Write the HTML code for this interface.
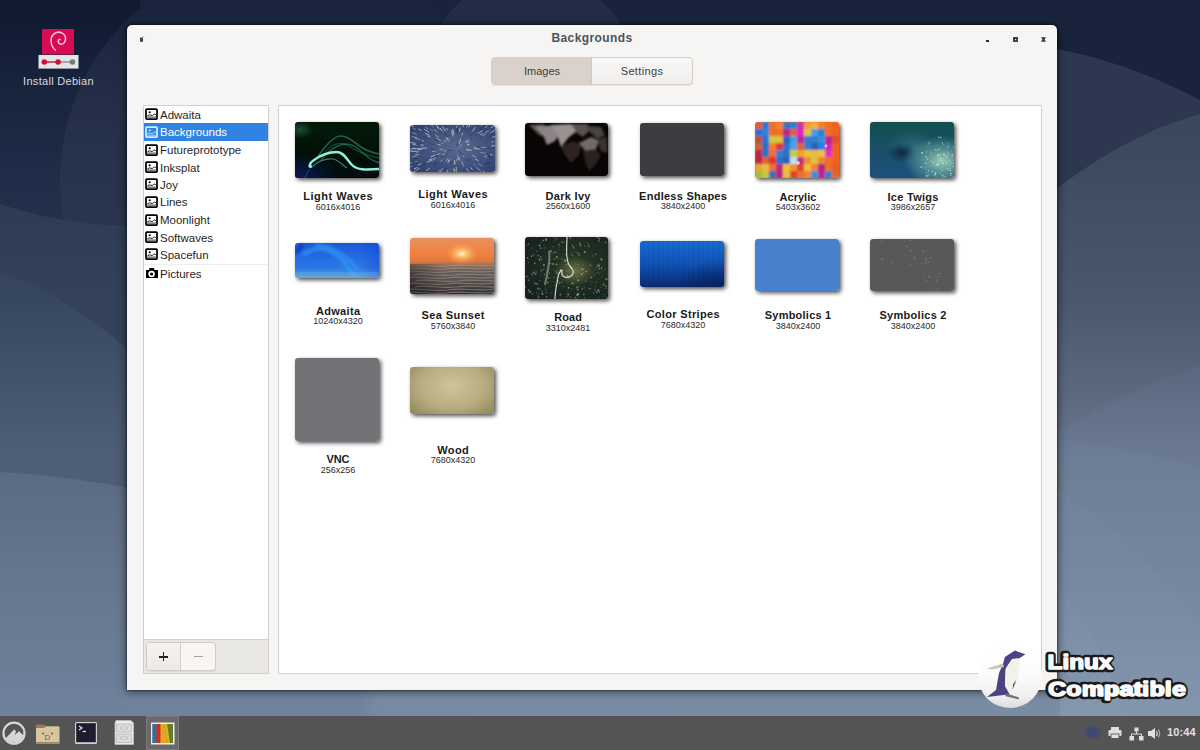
<!DOCTYPE html>
<html><head><meta charset="utf-8">
<style>
*{margin:0;padding:0;box-sizing:border-box}
html,body{width:1200px;height:750px;overflow:hidden}
body{position:relative;font-family:"Liberation Sans",sans-serif;background:#2a3650}
.abs{position:absolute}
#bgsvg{position:absolute;left:0;top:0}
#win{position:absolute;left:127px;top:25px;width:930px;height:665px;background:#f6f5f4;border-radius:5px 5px 0 0;box-shadow:0 1px 10px 1px rgba(0,0,0,.5),0 0 2px 1px rgba(0,0,0,.35)}
.title{position:absolute;left:127px;width:930px;top:31px;text-align:center;font-weight:bold;font-size:12px;letter-spacing:.4px;color:#4a5459;line-height:14px}
.side{position:absolute;left:143px;top:105px;width:126px;height:569px;border:1px solid #d5d0cc;background:#fff}
.tb{position:absolute;left:0;top:533px;width:124px;height:34px;border-top:1px solid #d5d0cc;background:#e9e7e4}
.main{position:absolute;left:278px;top:105px;width:764px;height:569px;border:1px solid #d5d0cc;background:#fff}
.it{position:absolute;left:160px;font-size:11.5px;color:#1f1f1f;line-height:12px}
.ic{position:absolute;left:145px;top:0;width:13px;height:12px}
.th{position:absolute;border-radius:3px;box-shadow:2px 2px 4px 0 rgba(0,0,0,.7);overflow:hidden}
.tt{position:absolute;width:115px;text-align:center;font-weight:bold;font-size:11px;letter-spacing:.55px;color:#1a1a1a;line-height:12px}
.td{position:absolute;width:115px;text-align:center;font-size:9px;color:#2a2a2a;line-height:10px}
</style></head><body>
<svg id="bgsvg" width="1200" height="750">
<defs>
<linearGradient id="bgL" x1="0" y1="0" x2="0" y2="716" gradientUnits="userSpaceOnUse">
<stop offset="0" stop-color="#0f1930"/><stop offset=".21" stop-color="#1e2a45"/><stop offset=".3" stop-color="#26334e"/><stop offset=".42" stop-color="#37475e"/><stop offset=".63" stop-color="#4f6078"/><stop offset=".84" stop-color="#67788f"/><stop offset="1" stop-color="#6f829c"/></linearGradient>
<linearGradient id="bgR" x1="0" y1="0" x2="0" y2="716" gradientUnits="userSpaceOnUse">
<stop offset="0" stop-color="#19243c"/><stop offset=".07" stop-color="#1b2540"/><stop offset=".14" stop-color="#2a3550"/><stop offset=".21" stop-color="#3c4a5e"/><stop offset=".28" stop-color="#404d64"/><stop offset=".42" stop-color="#4a586e"/><stop offset=".6" stop-color="#5a6982"/><stop offset=".64" stop-color="#68778f"/><stop offset=".78" stop-color="#6f7f96"/><stop offset="1" stop-color="#7c8fa6"/></linearGradient>
<linearGradient id="bgL0" x1="0" y1="0" x2="0" y2="716" gradientUnits="userSpaceOnUse">
<stop offset="0" stop-color="#0f1930"/><stop offset=".21" stop-color="#1e2a45"/><stop offset=".3" stop-color="#23304b"/><stop offset="1" stop-color="#23304b"/></linearGradient>
<linearGradient id="bgLA" x1="0" y1="204" x2="0" y2="300" gradientUnits="userSpaceOnUse">
<stop offset="0" stop-color="#2e3b55"/><stop offset="1" stop-color="#34415b"/></linearGradient>
<linearGradient id="bgLB" x1="0" y1="272" x2="0" y2="480" gradientUnits="userSpaceOnUse">
<stop offset="0" stop-color="#35445c"/><stop offset=".14" stop-color="#37475e"/><stop offset=".85" stop-color="#4d5d75"/><stop offset="1" stop-color="#4e5e76"/></linearGradient>
<linearGradient id="bgLC" x1="0" y1="472" x2="0" y2="716" gradientUnits="userSpaceOnUse">
<stop offset="0" stop-color="#5a6a82"/><stop offset=".52" stop-color="#67788f"/><stop offset="1" stop-color="#6f829c"/></linearGradient>
<linearGradient id="bgCirc" x1="0" y1="0" x2="0" y2="230" gradientUnits="userSpaceOnUse">
<stop offset="0" stop-color="#19243c"/><stop offset=".52" stop-color="#253048"/><stop offset="1" stop-color="#2a3650"/></linearGradient>
<linearGradient id="bgR3" x1="0" y1="114" x2="0" y2="716" gradientUnits="userSpaceOnUse">
<stop offset="0" stop-color="#3a475d"/><stop offset=".06" stop-color="#3c4a5e"/><stop offset=".31" stop-color="#4a586e"/><stop offset=".47" stop-color="#5c6a80"/><stop offset=".57" stop-color="#68778f"/><stop offset=".74" stop-color="#6f7f96"/><stop offset="1" stop-color="#7c8fa6"/></linearGradient>
<linearGradient id="bgB" x1="127" y1="0" x2="1057" y2="0" gradientUnits="userSpaceOnUse">
<stop offset="0" stop-color="#6f829c"/><stop offset=".25" stop-color="#70839d"/><stop offset=".27" stop-color="#788aa3"/><stop offset="1" stop-color="#7a8ca4"/></linearGradient>
</defs>
<rect x="0" y="0" width="1200" height="750" fill="#19243c"/>
<rect x="0" y="0" width="140" height="716" fill="url(#bgL0)"/>
<circle cx="285" cy="180" r="225" fill="url(#bgCirc)"/>
<path d="M0 204 Q64 226 140 226 L140 716 L0 716 Z" fill="url(#bgLA)"/>
<path d="M0 272 Q70 296 140 360 L140 716 L0 716 Z" fill="url(#bgLB)"/>
<path d="M0 472 Q70 476 140 490 L140 716 L0 716 Z" fill="url(#bgLC)"/>
<rect x="1040" y="0" width="160" height="716" fill="#19243c"/>
<path d="M1040 46 Q1120 58 1200 100 L1200 716 L1040 716 Z" fill="#2d3850"/>
<path d="M1040 202 Q1120 136 1200 114 L1200 716 L1040 716 Z" fill="url(#bgR3)"/>
<g fill="#c8d8ff">
<path d="M1040 442 Q1120 392 1200 366 L1200 716 L1040 716 Z" opacity=".035"/>
<path d="M1040 436 Q1130 448 1200 467 L1200 716 L1040 716 Z" opacity=".03"/>
<path d="M1040 480 Q1140 536 1200 629 L1200 716 L1040 716 Z" opacity=".03"/>
<path d="M1040 566 Q1095 620 1125 716 L1040 716 Z" opacity=".03"/>
</g>
<rect x="120" y="680" width="940" height="36" fill="url(#bgB)"/>
<circle cx="531" cy="85" r="109" fill="#232d46"/>

</svg>
<!-- desktop icon -->
<svg class="abs" style="left:36px;top:26px" width="46" height="46" viewBox="36 26 46 46">
<rect x="42" y="29" width="32" height="25.5" fill="#d70a53"/>
<path d="M56 50.5 C50.5 47 49 37 54.5 33.5 C60 30 66 34 65.5 39.5 C65 44 60.5 45.5 58.7 42.8 C57.5 41 58.5 38.8 60.8 39.6" fill="none" stroke="#f4c8d8" stroke-width="1.5"/>
<rect x="38.5" y="55" width="40" height="13.6" fill="#e2e6e6"/>
<line x1="44.3" y1="62" x2="58.1" y2="62" stroke="#c8103e" stroke-width="1.4"/>
<line x1="58.1" y1="62" x2="72.5" y2="62" stroke="#8a8a8a" stroke-width="1.4"/>
<circle cx="44.3" cy="62" r="2.8" fill="#d0103e"/><circle cx="58.1" cy="62" r="2.8" fill="#d0103e"/><circle cx="72.5" cy="62" r="2.8" fill="#7a7a7a"/>
</svg>
<div class="abs" style="left:17.5px;top:74.5px;width:82px;text-align:center;font-size:11px;letter-spacing:.3px;color:#dcdcdc">Install Debian</div>

<div id="win"></div>
<div class="title">Backgrounds</div>
<svg class="abs" style="left:139px;top:35px" width="6" height="8"><path d="M1 2.5 H4 V6.8 H1 Z" fill="#454545"/><path d="M3.6 2.5 L5 1" stroke="#999" stroke-width=".8"/></svg>
<div class="abs" style="left:986px;top:40px;width:3px;height:2px;background:#2e2e2e"></div>
<svg class="abs" style="left:1012px;top:36px" width="7" height="7"><rect x="1" y="1" width="5" height="5" rx=".8" fill="#3a3a3a"/><rect x="3" y="3" width="1.2" height="1.2" fill="#eee"/></svg>
<svg class="abs" style="left:1040px;top:36px" width="7" height="7"><path d="M1 1.2 H6 L4.6 3.5 L6 5.8 H1 L2.4 3.5 Z" fill="#3a3a3a"/></svg>

<!-- segmented -->
<div class="abs" style="left:491px;top:57px;width:202px;height:28px;border:1px solid #d3cec9;border-radius:4px;background:linear-gradient(180deg,#f8f8f7,#efeeed);overflow:hidden;box-shadow:0 1px 1px rgba(0,0,0,.07)">
  <div class="abs" style="left:0;top:0;width:100px;height:26px;background:#d8d1cc;border-right:1px solid #cdc7c2"></div>
  <div class="abs" style="left:0;top:7px;width:100px;text-align:center;font-size:11px;color:#3e3e3e">Images</div>
  <div class="abs" style="left:100px;top:7px;width:100px;text-align:center;font-size:11px;letter-spacing:.35px;color:#3e3e3e">Settings</div>
</div>

<div class="side"><div class="tb"></div></div>
<div class="abs" style="left:146px;top:642px;width:70px;height:29px;border:1px solid #d0cbc6;border-radius:4px;background:#f7f6f5;box-shadow:0 1px 0 rgba(0,0,0,.06)"></div>
<div class="abs" style="left:147px;top:643px;width:34px;height:27px;border-radius:3px 0 0 3px;background:linear-gradient(180deg,#f4f3f2,#eceae8);border-right:1px solid #d5d0cb"></div>
<div class="abs" style="left:159px;top:655.8px;width:8.8px;height:1.8px;background:#222"></div>
<div class="abs" style="left:162.5px;top:652px;width:1.8px;height:8.6px;background:#222"></div>
<div class="abs" style="left:193.5px;top:656.1px;width:9px;height:1.3px;background:#a4a4a4"></div>
<div class="abs" style="left:144px;top:123px;width:124px;height:18px;background:#3083e2"></div>
<div class="abs" style="left:144px;top:264px;width:124px;height:1px;background:#eeeeee"></div>
<div class="it" style="top:109px;color:#1f1f1f">Adwaita</div>
<svg class="abs" style="left:145px;top:108px" width="13" height="12" viewBox="0 0 13 12"><rect x="1" y="1" width="11" height="10" rx=".8" fill="none" stroke="#000" stroke-width="1.75"/><circle cx="4.7" cy="4.3" r="1.05" fill="#000"/><path d="M2.4 7.9 Q4.5 6.2 5.8 7.2 Q7.3 8.2 8.6 6.4 Q9.6 5.6 10.8 6.6" fill="none" stroke="#000" stroke-width=".9"/><line x1="2.2" y1="9.1" x2="10.8" y2="9.1" stroke="#000" stroke-width=".8"/></svg>
<div class="it" style="top:126px;color:#ffffff">Backgrounds</div>
<svg class="abs" style="left:145px;top:126px" width="13" height="12" viewBox="0 0 13 12"><rect x="1" y="1" width="11" height="10" rx=".8" fill="none" stroke="#c8f0ff" stroke-width="1.75"/><circle cx="4.7" cy="4.3" r="1.05" fill="#c8f0ff"/><path d="M2.4 7.9 Q4.5 6.2 5.8 7.2 Q7.3 8.2 8.6 6.4 Q9.6 5.6 10.8 6.6" fill="none" stroke="#c8f0ff" stroke-width=".9"/><line x1="2.2" y1="9.1" x2="10.8" y2="9.1" stroke="#c8f0ff" stroke-width=".8"/></svg>
<div class="it" style="top:144px;color:#1f1f1f">Futureprototype</div>
<svg class="abs" style="left:145px;top:144px" width="13" height="12" viewBox="0 0 13 12"><rect x="1" y="1" width="11" height="10" rx=".8" fill="none" stroke="#000" stroke-width="1.75"/><circle cx="4.7" cy="4.3" r="1.05" fill="#000"/><path d="M2.4 7.9 Q4.5 6.2 5.8 7.2 Q7.3 8.2 8.6 6.4 Q9.6 5.6 10.8 6.6" fill="none" stroke="#000" stroke-width=".9"/><line x1="2.2" y1="9.1" x2="10.8" y2="9.1" stroke="#000" stroke-width=".8"/></svg>
<div class="it" style="top:162px;color:#1f1f1f">Inksplat</div>
<svg class="abs" style="left:145px;top:161px" width="13" height="12" viewBox="0 0 13 12"><rect x="1" y="1" width="11" height="10" rx=".8" fill="none" stroke="#000" stroke-width="1.75"/><circle cx="4.7" cy="4.3" r="1.05" fill="#000"/><path d="M2.4 7.9 Q4.5 6.2 5.8 7.2 Q7.3 8.2 8.6 6.4 Q9.6 5.6 10.8 6.6" fill="none" stroke="#000" stroke-width=".9"/><line x1="2.2" y1="9.1" x2="10.8" y2="9.1" stroke="#000" stroke-width=".8"/></svg>
<div class="it" style="top:179px;color:#1f1f1f">Joy</div>
<svg class="abs" style="left:145px;top:178px" width="13" height="12" viewBox="0 0 13 12"><rect x="1" y="1" width="11" height="10" rx=".8" fill="none" stroke="#000" stroke-width="1.75"/><circle cx="4.7" cy="4.3" r="1.05" fill="#000"/><path d="M2.4 7.9 Q4.5 6.2 5.8 7.2 Q7.3 8.2 8.6 6.4 Q9.6 5.6 10.8 6.6" fill="none" stroke="#000" stroke-width=".9"/><line x1="2.2" y1="9.1" x2="10.8" y2="9.1" stroke="#000" stroke-width=".8"/></svg>
<div class="it" style="top:196px;color:#1f1f1f">Lines</div>
<svg class="abs" style="left:145px;top:196px" width="13" height="12" viewBox="0 0 13 12"><rect x="1" y="1" width="11" height="10" rx=".8" fill="none" stroke="#000" stroke-width="1.75"/><circle cx="4.7" cy="4.3" r="1.05" fill="#000"/><path d="M2.4 7.9 Q4.5 6.2 5.8 7.2 Q7.3 8.2 8.6 6.4 Q9.6 5.6 10.8 6.6" fill="none" stroke="#000" stroke-width=".9"/><line x1="2.2" y1="9.1" x2="10.8" y2="9.1" stroke="#000" stroke-width=".8"/></svg>
<div class="it" style="top:214px;color:#1f1f1f">Moonlight</div>
<svg class="abs" style="left:145px;top:214px" width="13" height="12" viewBox="0 0 13 12"><rect x="1" y="1" width="11" height="10" rx=".8" fill="none" stroke="#000" stroke-width="1.75"/><circle cx="4.7" cy="4.3" r="1.05" fill="#000"/><path d="M2.4 7.9 Q4.5 6.2 5.8 7.2 Q7.3 8.2 8.6 6.4 Q9.6 5.6 10.8 6.6" fill="none" stroke="#000" stroke-width=".9"/><line x1="2.2" y1="9.1" x2="10.8" y2="9.1" stroke="#000" stroke-width=".8"/></svg>
<div class="it" style="top:232px;color:#1f1f1f">Softwaves</div>
<svg class="abs" style="left:145px;top:231px" width="13" height="12" viewBox="0 0 13 12"><rect x="1" y="1" width="11" height="10" rx=".8" fill="none" stroke="#000" stroke-width="1.75"/><circle cx="4.7" cy="4.3" r="1.05" fill="#000"/><path d="M2.4 7.9 Q4.5 6.2 5.8 7.2 Q7.3 8.2 8.6 6.4 Q9.6 5.6 10.8 6.6" fill="none" stroke="#000" stroke-width=".9"/><line x1="2.2" y1="9.1" x2="10.8" y2="9.1" stroke="#000" stroke-width=".8"/></svg>
<div class="it" style="top:249px;color:#1f1f1f">Spacefun</div>
<svg class="abs" style="left:145px;top:248px" width="13" height="12" viewBox="0 0 13 12"><rect x="1" y="1" width="11" height="10" rx=".8" fill="none" stroke="#000" stroke-width="1.75"/><circle cx="4.7" cy="4.3" r="1.05" fill="#000"/><path d="M2.4 7.9 Q4.5 6.2 5.8 7.2 Q7.3 8.2 8.6 6.4 Q9.6 5.6 10.8 6.6" fill="none" stroke="#000" stroke-width=".9"/><line x1="2.2" y1="9.1" x2="10.8" y2="9.1" stroke="#000" stroke-width=".8"/></svg>
<div class="it" style="top:268px">Pictures</div>
<svg class="abs" style="left:145px;top:267px" width="14" height="13" viewBox="0 0 14 13"><path d="M1 3 H4 L4.5 1 H9 L9.5 3 H13 V11 H1 Z" fill="#000"/><circle cx="6.6" cy="7" r="3.2" fill="#fff"/><circle cx="6.6" cy="7" r="1.6" fill="#000"/></svg>

<div class="main"></div>
<div class="th" style="left:295px;top:122px;width:84px;height:56px"><svg width="84" height="56" viewBox="0 0 84 56" style="display:block"><defs><linearGradient id="lw1g" x1="0" y1="0" x2="0" y2="1"><stop offset="0" stop-color="#021a0a"/><stop offset=".6" stop-color="#021006"/><stop offset="1" stop-color="#030c10"/></linearGradient>
<radialGradient id="lw1r" cx=".05" cy="1" r=".45"><stop offset="0" stop-color="#0a1a55"/><stop offset="1" stop-color="#0a1a55" stop-opacity="0"/></radialGradient>
<radialGradient id="lw1r2" cx=".06" cy=".14" r=".16"><stop offset="0" stop-color="#1c5030"/><stop offset="1" stop-color="#1c5030" stop-opacity="0"/></radialGradient>
<filter id="blur1" x="-20%" y="-20%" width="140%" height="140%"><feGaussianBlur stdDeviation=".7"/></filter></defs><rect width="84" height="56" fill="url(#lw1g)"/><rect width="84" height="56" fill="url(#lw1r)"/><rect width="84" height="56" fill="url(#lw1r2)"/>
<g filter="url(#blur1)" fill="none">
<path d="M22 36 C30 24 38 14 46 14 C54 14 58 20 66 25 C72 29 78 31 84 32" stroke="#3aa08a" stroke-width="1.6" opacity=".55"/>
<path d="M26 38 C34 28 42 22 52 22 C60 22 66 30 74 36 C78 39 81 40 84 41" stroke="#2e8a78" stroke-width="1.4" opacity=".6"/>
<path d="M30 30 C36 22 46 19 54 24 C60 28 66 32 84 36" stroke="#48b0a0" stroke-width=".8" opacity=".5"/>
<path d="M17 44 C13 47 14 41 19 38 C26 33 34 30 42 30 C49 30 52 38 57 43 C62 48 70 48 84 47" stroke="#90f0d8" stroke-width="2.4"/>
<path d="M18 44 C22 40 30 36 38 37 C44 38 48 44 52 46" stroke="#60c8c0" stroke-width="1.2" opacity=".6"/>
<path d="M15 47 C12 50 11 53 10 56" stroke="#5080c0" stroke-width="1" opacity=".5"/>
</g></svg></div>
<div class="th" style="left:410px;top:125px;width:85px;height:47px"><svg width="85" height="47" viewBox="0 0 85 47" style="display:block"><defs><radialGradient id="lw2r" cx=".55" cy=".5" r=".7"><stop offset="0" stop-color="#5a6a90"/><stop offset="1" stop-color="#2e3e70"/></radialGradient><filter id="blur2"><feGaussianBlur stdDeviation=".5"/></filter></defs><rect width="85" height="47" fill="url(#lw2r)"/><g filter="url(#blur2)"><line x1="27.5" y1="7.1" x2="24.1" y2="4.1" stroke="#c8d0c8" stroke-width="1" opacity=".7"/><line x1="69.8" y1="4.4" x2="73.1" y2="1.6" stroke="#22305a" stroke-width="1" opacity=".7"/><line x1="18.2" y1="4.0" x2="15.2" y2="1.9" stroke="#a8b4b8" stroke-width="1" opacity=".7"/><line x1="7.7" y1="20.0" x2="2.4" y2="19.4" stroke="#c8d0c8" stroke-width="1" opacity=".7"/><line x1="80.5" y1="29.6" x2="84.8" y2="30.4" stroke="#c8d0c8" stroke-width="1" opacity=".7"/><line x1="49.1" y1="18.6" x2="51.2" y2="13.1" stroke="#c8d0c8" stroke-width="1" opacity=".7"/><line x1="47.3" y1="6.3" x2="47.4" y2="2.6" stroke="#22305a" stroke-width="1" opacity=".7"/><line x1="10.0" y1="14.5" x2="4.9" y2="13.2" stroke="#a8b4b8" stroke-width="1" opacity=".7"/><line x1="8.8" y1="26.8" x2="6.0" y2="27.1" stroke="#c8d0c8" stroke-width="1" opacity=".7"/><line x1="46.6" y1="3.0" x2="46.5" y2="0.7" stroke="#a8b4b8" stroke-width="1" opacity=".7"/><line x1="42.2" y1="25.0" x2="37.2" y2="26.0" stroke="#2a3a6a" stroke-width="1" opacity=".7"/><line x1="49.8" y1="21.3" x2="52.1" y2="19.1" stroke="#a8b4b8" stroke-width="1" opacity=".7"/><line x1="59.4" y1="11.5" x2="62.4" y2="8.4" stroke="#22305a" stroke-width="1" opacity=".7"/><line x1="42.1" y1="16.1" x2="40.1" y2="12.9" stroke="#22305a" stroke-width="1" opacity=".7"/><line x1="83.3" y1="5.5" x2="86.6" y2="3.9" stroke="#d8dcc8" stroke-width="1" opacity=".7"/><line x1="12.9" y1="23.0" x2="10.8" y2="22.9" stroke="#9ab0a0" stroke-width="1" opacity=".7"/><line x1="6.6" y1="26.2" x2="1.5" y2="26.5" stroke="#d8dcc8" stroke-width="1" opacity=".7"/><line x1="28.9" y1="16.5" x2="25.2" y2="14.9" stroke="#2a3a6a" stroke-width="1" opacity=".7"/><line x1="5.8" y1="4.4" x2="3.1" y2="3.1" stroke="#9ab0a0" stroke-width="1" opacity=".7"/><line x1="56.5" y1="2.9" x2="58.4" y2="-1.5" stroke="#9ab0a0" stroke-width="1" opacity=".7"/><line x1="49.1" y1="32.0" x2="50.1" y2="35.7" stroke="#9ab0a0" stroke-width="1" opacity=".7"/><line x1="32.8" y1="31.4" x2="30.9" y2="32.4" stroke="#2a3a6a" stroke-width="1" opacity=".7"/><line x1="30.2" y1="28.7" x2="26.4" y2="29.8" stroke="#a8b4b8" stroke-width="1" opacity=".7"/><line x1="65.3" y1="6.1" x2="67.4" y2="4.0" stroke="#2a3a6a" stroke-width="1" opacity=".7"/><line x1="77.9" y1="23.3" x2="80.6" y2="23.3" stroke="#2a3a6a" stroke-width="1" opacity=".7"/><line x1="46.7" y1="41.5" x2="46.6" y2="46.8" stroke="#22305a" stroke-width="1" opacity=".7"/><line x1="23.7" y1="19.5" x2="20.3" y2="18.9" stroke="#2a3a6a" stroke-width="1" opacity=".7"/><line x1="81.4" y1="7.1" x2="83.8" y2="5.9" stroke="#a8b4b8" stroke-width="1" opacity=".7"/><line x1="56.0" y1="0.6" x2="57.9" y2="-4.4" stroke="#a8b4b8" stroke-width="1" opacity=".7"/><line x1="22.3" y1="0.2" x2="19.7" y2="-2.4" stroke="#d8dcc8" stroke-width="1" opacity=".7"/><line x1="51.8" y1="15.0" x2="53.0" y2="12.8" stroke="#22305a" stroke-width="1" opacity=".7"/><line x1="80.8" y1="30.8" x2="85.6" y2="31.8" stroke="#2a3a6a" stroke-width="1" opacity=".7"/><line x1="76.5" y1="36.7" x2="81.5" y2="38.8" stroke="#22305a" stroke-width="1" opacity=".7"/><line x1="33.4" y1="18.8" x2="31.1" y2="17.9" stroke="#9ab0a0" stroke-width="1" opacity=".7"/><line x1="34.0" y1="9.0" x2="30.2" y2="4.5" stroke="#2a3a6a" stroke-width="1" opacity=".7"/><line x1="13.8" y1="16.0" x2="11.6" y2="15.5" stroke="#c8d0c8" stroke-width="1" opacity=".7"/><line x1="48.2" y1="25.2" x2="52.2" y2="29.4" stroke="#22305a" stroke-width="1" opacity=".7"/><line x1="2.2" y1="41.1" x2="-2.0" y2="42.7" stroke="#a8b4b8" stroke-width="1" opacity=".7"/><line x1="53.9" y1="44.9" x2="55.3" y2="49.1" stroke="#2a3a6a" stroke-width="1" opacity=".7"/><line x1="10.4" y1="39.9" x2="5.0" y2="42.3" stroke="#2a3a6a" stroke-width="1" opacity=".7"/><line x1="40.8" y1="14.7" x2="39.4" y2="12.5" stroke="#9ab0a0" stroke-width="1" opacity=".7"/><line x1="29.1" y1="12.4" x2="24.7" y2="9.6" stroke="#a8b4b8" stroke-width="1" opacity=".7"/><line x1="43.9" y1="9.6" x2="42.7" y2="4.0" stroke="#d8dcc8" stroke-width="1" opacity=".7"/><line x1="12.5" y1="25.5" x2="10.4" y2="25.6" stroke="#22305a" stroke-width="1" opacity=".7"/><line x1="25.3" y1="30.2" x2="23.1" y2="30.9" stroke="#d8dcc8" stroke-width="1" opacity=".7"/><line x1="44.1" y1="42.7" x2="43.5" y2="46.1" stroke="#a8b4b8" stroke-width="1" opacity=".7"/><line x1="45.3" y1="36.6" x2="44.8" y2="39.9" stroke="#a8b4b8" stroke-width="1" opacity=".7"/><line x1="52.1" y1="37.1" x2="54.0" y2="41.7" stroke="#a8b4b8" stroke-width="1" opacity=".7"/><line x1="68.5" y1="38.5" x2="72.6" y2="41.2" stroke="#a8b4b8" stroke-width="1" opacity=".7"/><line x1="17.0" y1="23.2" x2="12.1" y2="23.0" stroke="#c8d0c8" stroke-width="1" opacity=".7"/><line x1="67.2" y1="22.2" x2="69.9" y2="21.9" stroke="#22305a" stroke-width="1" opacity=".7"/><line x1="81.3" y1="21.0" x2="87.0" y2="20.5" stroke="#d8dcc8" stroke-width="1" opacity=".7"/><line x1="81.2" y1="17.1" x2="84.0" y2="16.6" stroke="#a8b4b8" stroke-width="1" opacity=".7"/><line x1="40.0" y1="15.9" x2="37.4" y2="12.9" stroke="#22305a" stroke-width="1" opacity=".7"/><line x1="71.4" y1="22.5" x2="76.0" y2="22.3" stroke="#9ab0a0" stroke-width="1" opacity=".7"/><line x1="7.2" y1="31.0" x2="1.7" y2="32.0" stroke="#9ab0a0" stroke-width="1" opacity=".7"/><line x1="63.8" y1="22.5" x2="66.5" y2="22.2" stroke="#9ab0a0" stroke-width="1" opacity=".7"/><line x1="28.3" y1="37.6" x2="23.5" y2="41.1" stroke="#2a3a6a" stroke-width="1" opacity=".7"/><line x1="39.4" y1="34.9" x2="38.0" y2="36.9" stroke="#a8b4b8" stroke-width="1" opacity=".7"/><line x1="14.5" y1="6.0" x2="12.2" y2="4.7" stroke="#2a3a6a" stroke-width="1" opacity=".7"/><line x1="68.6" y1="6.9" x2="72.7" y2="3.6" stroke="#2a3a6a" stroke-width="1" opacity=".7"/><line x1="55.9" y1="16.5" x2="59.1" y2="13.8" stroke="#a8b4b8" stroke-width="1" opacity=".7"/><line x1="1.8" y1="37.6" x2="-2.9" y2="39.0" stroke="#c8d0c8" stroke-width="1" opacity=".7"/><line x1="44.8" y1="43.9" x2="44.3" y2="47.6" stroke="#a8b4b8" stroke-width="1" opacity=".7"/><line x1="70.2" y1="9.9" x2="72.8" y2="8.4" stroke="#d8dcc8" stroke-width="1" opacity=".7"/><line x1="42.6" y1="35.9" x2="41.5" y2="39.0" stroke="#22305a" stroke-width="1" opacity=".7"/><line x1="35.6" y1="6.2" x2="32.6" y2="1.4" stroke="#d8dcc8" stroke-width="1" opacity=".7"/><line x1="76.3" y1="31.1" x2="81.4" y2="32.4" stroke="#22305a" stroke-width="1" opacity=".7"/><line x1="35.8" y1="43.1" x2="33.7" y2="46.6" stroke="#22305a" stroke-width="1" opacity=".7"/><line x1="12.9" y1="24.0" x2="7.4" y2="24.0" stroke="#a8b4b8" stroke-width="1" opacity=".7"/><line x1="51.7" y1="36.5" x2="52.6" y2="38.9" stroke="#a8b4b8" stroke-width="1" opacity=".7"/><line x1="40.2" y1="34.1" x2="37.9" y2="37.6" stroke="#d8dcc8" stroke-width="1" opacity=".7"/><line x1="58.0" y1="24.9" x2="61.9" y2="25.3" stroke="#c8d0c8" stroke-width="1" opacity=".7"/><line x1="75.1" y1="2.7" x2="77.3" y2="1.0" stroke="#c8d0c8" stroke-width="1" opacity=".7"/><line x1="65.6" y1="23.9" x2="69.9" y2="23.8" stroke="#c8d0c8" stroke-width="1" opacity=".7"/><line x1="37.7" y1="28.8" x2="34.1" y2="30.6" stroke="#22305a" stroke-width="1" opacity=".7"/><line x1="16.9" y1="13.0" x2="13.2" y2="11.6" stroke="#2a3a6a" stroke-width="1" opacity=".7"/><line x1="43.2" y1="11.6" x2="41.9" y2="7.7" stroke="#d8dcc8" stroke-width="1" opacity=".7"/><line x1="78.4" y1="42.0" x2="80.9" y2="43.4" stroke="#2a3a6a" stroke-width="1" opacity=".7"/><line x1="11.7" y1="5.7" x2="8.3" y2="4.0" stroke="#c8d0c8" stroke-width="1" opacity=".7"/><line x1="57.0" y1="20.1" x2="59.7" y2="19.1" stroke="#d8dcc8" stroke-width="1" opacity=".7"/><line x1="66.6" y1="42.2" x2="68.6" y2="43.9" stroke="#9ab0a0" stroke-width="1" opacity=".7"/><line x1="54.7" y1="17.2" x2="57.0" y2="15.2" stroke="#a8b4b8" stroke-width="1" opacity=".7"/><line x1="82.2" y1="10.3" x2="87.7" y2="8.2" stroke="#2a3a6a" stroke-width="1" opacity=".7"/><line x1="75.2" y1="7.7" x2="79.3" y2="5.3" stroke="#a8b4b8" stroke-width="1" opacity=".7"/><line x1="13.7" y1="20.3" x2="9.7" y2="19.8" stroke="#d8dcc8" stroke-width="1" opacity=".7"/><line x1="35.8" y1="16.8" x2="33.8" y2="15.5" stroke="#d8dcc8" stroke-width="1" opacity=".7"/><line x1="1.7" y1="26.0" x2="-2.1" y2="26.2" stroke="#c8d0c8" stroke-width="1" opacity=".7"/><line x1="32.7" y1="24.3" x2="29.5" y2="24.4" stroke="#c8d0c8" stroke-width="1" opacity=".7"/><line x1="9.6" y1="43.2" x2="7.0" y2="44.5" stroke="#c8d0c8" stroke-width="1" opacity=".7"/><line x1="7.1" y1="12.8" x2="1.7" y2="11.3" stroke="#a8b4b8" stroke-width="1" opacity=".7"/><line x1="23.0" y1="6.1" x2="20.0" y2="3.9" stroke="#9ab0a0" stroke-width="1" opacity=".7"/><line x1="69.6" y1="12.2" x2="71.9" y2="10.9" stroke="#22305a" stroke-width="1" opacity=".7"/><line x1="48.5" y1="32.9" x2="48.9" y2="35.2" stroke="#c8d0c8" stroke-width="1" opacity=".7"/><line x1="68.0" y1="8.6" x2="72.5" y2="5.3" stroke="#d8dcc8" stroke-width="1" opacity=".7"/><line x1="79.8" y1="29.8" x2="84.9" y2="30.7" stroke="#c8d0c8" stroke-width="1" opacity=".7"/><line x1="51.7" y1="10.5" x2="52.7" y2="7.6" stroke="#c8d0c8" stroke-width="1" opacity=".7"/><line x1="38.6" y1="15.9" x2="35.5" y2="13.0" stroke="#d8dcc8" stroke-width="1" opacity=".7"/><line x1="52.8" y1="2.0" x2="54.1" y2="-2.6" stroke="#c8d0c8" stroke-width="1" opacity=".7"/><line x1="82.4" y1="12.3" x2="85.0" y2="11.5" stroke="#d8dcc8" stroke-width="1" opacity=".7"/><line x1="53.4" y1="25.0" x2="56.2" y2="25.4" stroke="#2a3a6a" stroke-width="1" opacity=".7"/><line x1="42.5" y1="8.4" x2="41.6" y2="5.1" stroke="#c8d0c8" stroke-width="1" opacity=".7"/><line x1="84.5" y1="1.7" x2="86.3" y2="0.7" stroke="#22305a" stroke-width="1" opacity=".7"/><line x1="46.8" y1="8.9" x2="46.8" y2="5.0" stroke="#2a3a6a" stroke-width="1" opacity=".7"/><line x1="9.0" y1="38.5" x2="5.6" y2="39.8" stroke="#2a3a6a" stroke-width="1" opacity=".7"/><line x1="46.4" y1="41.8" x2="46.2" y2="47.6" stroke="#d8dcc8" stroke-width="1" opacity=".7"/><line x1="58.5" y1="46.2" x2="60.0" y2="49.2" stroke="#9ab0a0" stroke-width="1" opacity=".7"/><line x1="62.0" y1="6.6" x2="65.8" y2="2.0" stroke="#c8d0c8" stroke-width="1" opacity=".7"/><line x1="71.1" y1="0.7" x2="74.4" y2="-2.5" stroke="#d8dcc8" stroke-width="1" opacity=".7"/><line x1="36.6" y1="2.6" x2="34.6" y2="-1.6" stroke="#2a3a6a" stroke-width="1" opacity=".7"/><line x1="74.0" y1="31.5" x2="77.0" y2="32.4" stroke="#a8b4b8" stroke-width="1" opacity=".7"/><line x1="58.9" y1="2.1" x2="60.2" y2="-0.3" stroke="#d8dcc8" stroke-width="1" opacity=".7"/><line x1="37.9" y1="12.4" x2="34.3" y2="7.8" stroke="#22305a" stroke-width="1" opacity=".7"/><line x1="27.5" y1="1.6" x2="23.9" y2="-2.5" stroke="#a8b4b8" stroke-width="1" opacity=".7"/><line x1="30.3" y1="0.1" x2="28.3" y2="-2.8" stroke="#2a3a6a" stroke-width="1" opacity=".7"/><line x1="23.7" y1="30.8" x2="20.8" y2="31.7" stroke="#c8d0c8" stroke-width="1" opacity=".7"/><line x1="7.7" y1="38.4" x2="5.3" y2="39.3" stroke="#22305a" stroke-width="1" opacity=".7"/><line x1="3.5" y1="1.1" x2="0.7" y2="-0.4" stroke="#a8b4b8" stroke-width="1" opacity=".7"/><line x1="7.2" y1="45.0" x2="2.4" y2="47.5" stroke="#a8b4b8" stroke-width="1" opacity=".7"/><line x1="55.9" y1="33.7" x2="59.6" y2="37.7" stroke="#2a3a6a" stroke-width="1" opacity=".7"/><line x1="65.0" y1="33.9" x2="68.5" y2="35.8" stroke="#d8dcc8" stroke-width="1" opacity=".7"/><line x1="61.6" y1="30.2" x2="63.6" y2="31.1" stroke="#9ab0a0" stroke-width="1" opacity=".7"/><line x1="75.8" y1="29.5" x2="80.7" y2="30.4" stroke="#22305a" stroke-width="1" opacity=".7"/><line x1="11.8" y1="24.6" x2="7.8" y2="24.7" stroke="#c8d0c8" stroke-width="1" opacity=".7"/><line x1="70.2" y1="27.5" x2="75.8" y2="28.3" stroke="#9ab0a0" stroke-width="1" opacity=".7"/><line x1="81.3" y1="30.2" x2="83.6" y2="30.6" stroke="#c8d0c8" stroke-width="1" opacity=".7"/><line x1="11.3" y1="17.0" x2="8.9" y2="16.5" stroke="#2a3a6a" stroke-width="1" opacity=".7"/><line x1="47.5" y1="29.5" x2="47.9" y2="34.0" stroke="#9ab0a0" stroke-width="1" opacity=".7"/><line x1="20.8" y1="12.4" x2="17.3" y2="10.8" stroke="#c8d0c8" stroke-width="1" opacity=".7"/><line x1="63.6" y1="23.6" x2="67.7" y2="23.5" stroke="#9ab0a0" stroke-width="1" opacity=".7"/><line x1="44.7" y1="35.0" x2="43.9" y2="38.9" stroke="#c8d0c8" stroke-width="1" opacity=".7"/><line x1="71.9" y1="11.0" x2="76.4" y2="8.7" stroke="#a8b4b8" stroke-width="1" opacity=".7"/><line x1="62.9" y1="45.9" x2="65.2" y2="49.1" stroke="#2a3a6a" stroke-width="1" opacity=".7"/><line x1="6.5" y1="42.8" x2="3.7" y2="44.1" stroke="#c8d0c8" stroke-width="1" opacity=".7"/><line x1="52.4" y1="30.2" x2="54.0" y2="31.9" stroke="#a8b4b8" stroke-width="1" opacity=".7"/><line x1="28.2" y1="30.6" x2="23.7" y2="32.2" stroke="#22305a" stroke-width="1" opacity=".7"/><line x1="48.3" y1="0.6" x2="48.4" y2="-1.7" stroke="#d8dcc8" stroke-width="1" opacity=".7"/><line x1="82.7" y1="4.7" x2="85.2" y2="3.3" stroke="#2a3a6a" stroke-width="1" opacity=".7"/><line x1="24.7" y1="24.3" x2="20.9" y2="24.3" stroke="#2a3a6a" stroke-width="1" opacity=".7"/><line x1="65.2" y1="46.7" x2="67.8" y2="50.0" stroke="#d8dcc8" stroke-width="1" opacity=".7"/><line x1="83.1" y1="44.0" x2="85.0" y2="45.0" stroke="#2a3a6a" stroke-width="1" opacity=".7"/><line x1="6.5" y1="23.8" x2="0.5" y2="23.8" stroke="#d8dcc8" stroke-width="1" opacity=".7"/><line x1="32.9" y1="43.1" x2="29.5" y2="47.7" stroke="#c8d0c8" stroke-width="1" opacity=".7"/><line x1="49.4" y1="6.7" x2="50.0" y2="2.6" stroke="#d8dcc8" stroke-width="1" opacity=".7"/><line x1="11.3" y1="38.6" x2="7.5" y2="40.1" stroke="#c8d0c8" stroke-width="1" opacity=".7"/><line x1="59.8" y1="10.9" x2="63.7" y2="6.9" stroke="#2a3a6a" stroke-width="1" opacity=".7"/><line x1="33.5" y1="7.5" x2="29.8" y2="3.0" stroke="#9ab0a0" stroke-width="1" opacity=".7"/><line x1="38.3" y1="14.2" x2="36.6" y2="12.3" stroke="#d8dcc8" stroke-width="1" opacity=".7"/><line x1="32.0" y1="5.7" x2="29.9" y2="3.1" stroke="#d8dcc8" stroke-width="1" opacity=".7"/><line x1="63.8" y1="39.4" x2="65.6" y2="41.1" stroke="#a8b4b8" stroke-width="1" opacity=".7"/><line x1="60.6" y1="42.4" x2="62.5" y2="44.9" stroke="#d8dcc8" stroke-width="1" opacity=".7"/><line x1="5.5" y1="18.3" x2="0.1" y2="17.6" stroke="#c8d0c8" stroke-width="1" opacity=".7"/><line x1="30.7" y1="20.1" x2="27.6" y2="19.4" stroke="#c8d0c8" stroke-width="1" opacity=".7"/><line x1="23.9" y1="2.4" x2="20.5" y2="-0.7" stroke="#9ab0a0" stroke-width="1" opacity=".7"/><line x1="79.5" y1="11.7" x2="82.4" y2="10.6" stroke="#22305a" stroke-width="1" opacity=".7"/><line x1="26.8" y1="36.3" x2="22.4" y2="39.0" stroke="#2a3a6a" stroke-width="1" opacity=".7"/><line x1="75.2" y1="38.2" x2="79.2" y2="40.2" stroke="#22305a" stroke-width="1" opacity=".7"/><line x1="46.7" y1="33.8" x2="46.6" y2="36.0" stroke="#9ab0a0" stroke-width="1" opacity=".7"/><line x1="34.9" y1="28.9" x2="32.6" y2="29.9" stroke="#d8dcc8" stroke-width="1" opacity=".7"/><line x1="41.3" y1="42.9" x2="40.1" y2="46.9" stroke="#a8b4b8" stroke-width="1" opacity=".7"/><line x1="40.1" y1="16.2" x2="38.0" y2="13.8" stroke="#9ab0a0" stroke-width="1" opacity=".7"/><line x1="62.8" y1="30.7" x2="66.1" y2="32.1" stroke="#a8b4b8" stroke-width="1" opacity=".7"/><line x1="25.6" y1="26.2" x2="22.0" y2="26.6" stroke="#a8b4b8" stroke-width="1" opacity=".7"/><line x1="54.7" y1="3.5" x2="56.1" y2="-0.2" stroke="#2a3a6a" stroke-width="1" opacity=".7"/><line x1="46.8" y1="21.3" x2="46.5" y2="18.0" stroke="#2a3a6a" stroke-width="1" opacity=".7"/><line x1="36.3" y1="25.7" x2="33.4" y2="26.2" stroke="#a8b4b8" stroke-width="1" opacity=".7"/><line x1="29.1" y1="4.3" x2="27.1" y2="2.1" stroke="#d8dcc8" stroke-width="1" opacity=".7"/><line x1="68.8" y1="9.5" x2="70.5" y2="8.3" stroke="#2a3a6a" stroke-width="1" opacity=".7"/><line x1="32.5" y1="35.1" x2="30.3" y2="36.8" stroke="#d8dcc8" stroke-width="1" opacity=".7"/><line x1="28.7" y1="2.9" x2="26.7" y2="0.6" stroke="#d8dcc8" stroke-width="1" opacity=".7"/><line x1="10.7" y1="23.7" x2="6.2" y2="23.6" stroke="#a8b4b8" stroke-width="1" opacity=".7"/><line x1="7.9" y1="42.1" x2="4.7" y2="43.6" stroke="#9ab0a0" stroke-width="1" opacity=".7"/><line x1="37.9" y1="44.8" x2="35.7" y2="49.8" stroke="#c8d0c8" stroke-width="1" opacity=".7"/><line x1="10.8" y1="20.0" x2="5.8" y2="19.4" stroke="#2a3a6a" stroke-width="1" opacity=".7"/><line x1="82.3" y1="23.0" x2="84.6" y2="23.0" stroke="#22305a" stroke-width="1" opacity=".7"/><line x1="72.7" y1="45.7" x2="75.0" y2="47.6" stroke="#c8d0c8" stroke-width="1" opacity=".7"/><line x1="19.0" y1="7.1" x2="14.0" y2="4.1" stroke="#c8d0c8" stroke-width="1" opacity=".7"/><line x1="80.0" y1="33.9" x2="84.4" y2="35.2" stroke="#2a3a6a" stroke-width="1" opacity=".7"/><line x1="7.2" y1="36.5" x2="5.3" y2="37.1" stroke="#a8b4b8" stroke-width="1" opacity=".7"/><line x1="19.8" y1="43.2" x2="16.0" y2="45.9" stroke="#d8dcc8" stroke-width="1" opacity=".7"/><line x1="81.8" y1="29.4" x2="85.9" y2="30.1" stroke="#2a3a6a" stroke-width="1" opacity=".7"/><line x1="59.4" y1="5.3" x2="60.6" y2="3.4" stroke="#22305a" stroke-width="1" opacity=".7"/><line x1="80.2" y1="9.0" x2="83.0" y2="7.8" stroke="#22305a" stroke-width="1" opacity=".7"/><line x1="0.1" y1="25.3" x2="-5.9" y2="25.4" stroke="#d8dcc8" stroke-width="1" opacity=".7"/><line x1="81.5" y1="30.3" x2="87.0" y2="31.3" stroke="#2a3a6a" stroke-width="1" opacity=".7"/><line x1="44.7" y1="25.7" x2="43.0" y2="27.0" stroke="#2a3a6a" stroke-width="1" opacity=".7"/><line x1="59.9" y1="14.4" x2="61.6" y2="13.2" stroke="#2a3a6a" stroke-width="1" opacity=".7"/><line x1="75.2" y1="30.4" x2="77.5" y2="30.9" stroke="#a8b4b8" stroke-width="1" opacity=".7"/><line x1="56.7" y1="43.5" x2="58.0" y2="46.1" stroke="#c8d0c8" stroke-width="1" opacity=".7"/><line x1="59.1" y1="33.8" x2="61.8" y2="35.9" stroke="#2a3a6a" stroke-width="1" opacity=".7"/><line x1="16.8" y1="37.5" x2="12.3" y2="39.5" stroke="#22305a" stroke-width="1" opacity=".7"/><line x1="5.7" y1="23.3" x2="2.9" y2="23.3" stroke="#a8b4b8" stroke-width="1" opacity=".7"/><line x1="19.6" y1="10.4" x2="15.1" y2="8.2" stroke="#d8dcc8" stroke-width="1" opacity=".7"/><line x1="9.3" y1="29.3" x2="4.9" y2="29.9" stroke="#a8b4b8" stroke-width="1" opacity=".7"/><line x1="41.2" y1="42.8" x2="40.6" y2="44.9" stroke="#22305a" stroke-width="1" opacity=".7"/><line x1="12.4" y1="18.5" x2="9.6" y2="18.0" stroke="#22305a" stroke-width="1" opacity=".7"/><line x1="12.1" y1="2.4" x2="10.2" y2="1.3" stroke="#2a3a6a" stroke-width="1" opacity=".7"/><line x1="38.2" y1="33.5" x2="36.0" y2="35.9" stroke="#c8d0c8" stroke-width="1" opacity=".7"/><line x1="84.8" y1="43.8" x2="87.7" y2="45.3" stroke="#a8b4b8" stroke-width="1" opacity=".7"/><line x1="55.5" y1="24.7" x2="59.3" y2="25.0" stroke="#d8dcc8" stroke-width="1" opacity=".7"/><line x1="56.5" y1="17.8" x2="59.4" y2="15.9" stroke="#d8dcc8" stroke-width="1" opacity=".7"/><line x1="37.6" y1="5.1" x2="36.6" y2="3.1" stroke="#c8d0c8" stroke-width="1" opacity=".7"/><line x1="29.9" y1="44.9" x2="28.3" y2="46.8" stroke="#a8b4b8" stroke-width="1" opacity=".7"/><line x1="32.3" y1="36.1" x2="29.8" y2="38.2" stroke="#2a3a6a" stroke-width="1" opacity=".7"/><line x1="7.5" y1="33.1" x2="4.7" y2="33.8" stroke="#22305a" stroke-width="1" opacity=".7"/><line x1="78.2" y1="9.1" x2="81.3" y2="7.6" stroke="#2a3a6a" stroke-width="1" opacity=".7"/><line x1="2.6" y1="19.3" x2="-2.6" y2="18.8" stroke="#2a3a6a" stroke-width="1" opacity=".7"/><line x1="3.5" y1="1.6" x2="1.5" y2="0.6" stroke="#c8d0c8" stroke-width="1" opacity=".7"/><line x1="21.8" y1="35.1" x2="16.7" y2="37.4" stroke="#d8dcc8" stroke-width="1" opacity=".7"/><line x1="30.9" y1="15.7" x2="25.7" y2="13.1" stroke="#c8d0c8" stroke-width="1" opacity=".7"/><line x1="22.3" y1="33.7" x2="19.2" y2="34.9" stroke="#d8dcc8" stroke-width="1" opacity=".7"/><line x1="25.3" y1="33.9" x2="21.3" y2="35.7" stroke="#9ab0a0" stroke-width="1" opacity=".7"/><line x1="80.5" y1="3.1" x2="84.9" y2="0.3" stroke="#c8d0c8" stroke-width="1" opacity=".7"/><line x1="40.4" y1="45.0" x2="38.6" y2="50.5" stroke="#2a3a6a" stroke-width="1" opacity=".7"/><line x1="67.1" y1="42.9" x2="71.0" y2="46.5" stroke="#a8b4b8" stroke-width="1" opacity=".7"/><line x1="78.9" y1="8.6" x2="83.6" y2="6.3" stroke="#9ab0a0" stroke-width="1" opacity=".7"/><line x1="25.8" y1="32.5" x2="23.4" y2="33.5" stroke="#a8b4b8" stroke-width="1" opacity=".7"/><line x1="27.9" y1="15.0" x2="24.7" y2="13.6" stroke="#22305a" stroke-width="1" opacity=".7"/><line x1="6.7" y1="9.3" x2="2.0" y2="7.6" stroke="#a8b4b8" stroke-width="1" opacity=".7"/><line x1="34.7" y1="30.5" x2="31.2" y2="32.4" stroke="#22305a" stroke-width="1" opacity=".7"/></g></svg></div>
<div class="th" style="left:525px;top:123px;width:83px;height:53px"><svg width="83" height="53" viewBox="0 0 83 53" style="display:block"><defs><filter id="blur3" x="-20%" y="-20%" width="140%" height="140%"><feGaussianBlur stdDeviation=".9"/></filter></defs><rect width="83" height="53" fill="#0a0505"/><g filter="url(#blur3)">
<path d="M4 2 L18 1 L24 6 L20 14 L14 12 Z" fill="#5e5454"/>
<path d="M10 4 L30 2 L36 8 L30 18 L22 22 L18 12 Z" fill="#8c8484"/>
<path d="M26 2 L46 1 L52 8 L44 14 L36 24 L32 12 Z" fill="#9a9292"/>
<path d="M46 1 L62 1 L66 6 L58 14 L52 10 Z" fill="#5a5050"/>
<path d="M60 3 L76 4 L80 12 L72 16 L66 10 Z" fill="#4a4242"/>
<path d="M36 24 L48 18 L56 22 L54 32 L46 40 L40 32 Z" fill="#2e2424"/>
<path d="M54 20 L66 14 L74 18 L70 28 L62 30 Z" fill="#726a6a"/>
<path d="M58 28 L70 26 L76 32 L70 42 L64 48 L60 38 Z" fill="#2a2020"/>
<path d="M72 16 L82 14 L82 30 L76 28 Z" fill="#3a3030"/>
</g></svg></div>
<div class="th" style="left:640px;top:123px;width:84px;height:53px"><div style="width:100%;height:100%;background:#3e3c42"></div></div>
<div class="th" style="left:755px;top:122px;width:84px;height:56px"><svg width="84" height="56" viewBox="0 0 84 56" style="display:block"><defs><filter id="blur5" x="-10%" y="-10%" width="120%" height="120%"><feGaussianBlur stdDeviation="1.1"/></filter></defs><rect width="84" height="56" fill="#e87a30"/><g filter="url(#blur5)"><rect x="0" y="0" width="7.5" height="7.5" fill="#e05a30"/><rect x="7" y="0" width="7.5" height="7.5" fill="#2a7ad0"/><rect x="14" y="0" width="7.5" height="7.5" fill="#f07020"/><rect x="21" y="0" width="7.5" height="7.5" fill="#f08030"/><rect x="28" y="0" width="7.5" height="7.5" fill="#3a70c0"/><rect x="35" y="0" width="7.5" height="7.5" fill="#2a80d0"/><rect x="42" y="0" width="7.5" height="7.5" fill="#d030a0"/><rect x="49" y="0" width="7.5" height="7.5" fill="#f0a030"/><rect x="56" y="0" width="7.5" height="7.5" fill="#f0b040"/><rect x="63" y="0" width="7.5" height="7.5" fill="#f08030"/><rect x="70" y="0" width="7.5" height="7.5" fill="#f07020"/><rect x="77" y="0" width="7.5" height="7.5" fill="#f06020"/><rect x="0" y="7" width="7.5" height="7.5" fill="#2a70d0"/><rect x="7" y="7" width="7.5" height="7.5" fill="#3080e0"/><rect x="14" y="7" width="7.5" height="7.5" fill="#f07020"/><rect x="21" y="7" width="7.5" height="7.5" fill="#f07030"/><rect x="28" y="7" width="7.5" height="7.5" fill="#c02080"/><rect x="35" y="7" width="7.5" height="7.5" fill="#e06030"/><rect x="42" y="7" width="7.5" height="7.5" fill="#e020c0"/><rect x="49" y="7" width="7.5" height="7.5" fill="#e0c040"/><rect x="56" y="7" width="7.5" height="7.5" fill="#40a0e0"/><rect x="63" y="7" width="7.5" height="7.5" fill="#2a80d0"/><rect x="70" y="7" width="7.5" height="7.5" fill="#f07020"/><rect x="77" y="7" width="7.5" height="7.5" fill="#f06020"/><rect x="0" y="14" width="7.5" height="7.5" fill="#c05030"/><rect x="7" y="14" width="7.5" height="7.5" fill="#3070d0"/><rect x="14" y="14" width="7.5" height="7.5" fill="#c0d040"/><rect x="21" y="14" width="7.5" height="7.5" fill="#e0c030"/><rect x="28" y="14" width="7.5" height="7.5" fill="#3060c0"/><rect x="35" y="14" width="7.5" height="7.5" fill="#40a0e0"/><rect x="42" y="14" width="7.5" height="7.5" fill="#c020a0"/><rect x="49" y="14" width="7.5" height="7.5" fill="#2a80d0"/><rect x="56" y="14" width="7.5" height="7.5" fill="#3080d0"/><rect x="63" y="14" width="7.5" height="7.5" fill="#3090e0"/><rect x="70" y="14" width="7.5" height="7.5" fill="#c02090"/><rect x="77" y="14" width="7.5" height="7.5" fill="#e05020"/><rect x="0" y="21" width="7.5" height="7.5" fill="#d06030"/><rect x="7" y="21" width="7.5" height="7.5" fill="#2a70c0"/><rect x="14" y="21" width="7.5" height="7.5" fill="#f08030"/><rect x="21" y="21" width="7.5" height="7.5" fill="#e03040"/><rect x="28" y="21" width="7.5" height="7.5" fill="#3070d0"/><rect x="35" y="21" width="7.5" height="7.5" fill="#50a0e0"/><rect x="42" y="21" width="7.5" height="7.5" fill="#e06030"/><rect x="49" y="21" width="7.5" height="7.5" fill="#3080d0"/><rect x="56" y="21" width="7.5" height="7.5" fill="#2a60c0"/><rect x="63" y="21" width="7.5" height="7.5" fill="#2080e0"/><rect x="70" y="21" width="7.5" height="7.5" fill="#d020b0"/><rect x="77" y="21" width="7.5" height="7.5" fill="#f06020"/><rect x="0" y="28" width="7.5" height="7.5" fill="#c02050"/><rect x="7" y="28" width="7.5" height="7.5" fill="#3070c0"/><rect x="14" y="28" width="7.5" height="7.5" fill="#f07020"/><rect x="21" y="28" width="7.5" height="7.5" fill="#3080d0"/><rect x="28" y="28" width="7.5" height="7.5" fill="#3070c0"/><rect x="35" y="28" width="7.5" height="7.5" fill="#c0d040"/><rect x="42" y="28" width="7.5" height="7.5" fill="#f0a030"/><rect x="49" y="28" width="7.5" height="7.5" fill="#f0c030"/><rect x="56" y="28" width="7.5" height="7.5" fill="#e0c040"/><rect x="63" y="28" width="7.5" height="7.5" fill="#f0c040"/><rect x="70" y="28" width="7.5" height="7.5" fill="#e030c0"/><rect x="77" y="28" width="7.5" height="7.5" fill="#f06020"/><rect x="0" y="35" width="7.5" height="7.5" fill="#c02040"/><rect x="7" y="35" width="7.5" height="7.5" fill="#e06030"/><rect x="14" y="35" width="7.5" height="7.5" fill="#e03030"/><rect x="21" y="35" width="7.5" height="7.5" fill="#3070c0"/><rect x="28" y="35" width="7.5" height="7.5" fill="#2a60c0"/><rect x="35" y="35" width="7.5" height="7.5" fill="#c0e0f0"/><rect x="42" y="35" width="7.5" height="7.5" fill="#c03080"/><rect x="49" y="35" width="7.5" height="7.5" fill="#f09030"/><rect x="56" y="35" width="7.5" height="7.5" fill="#e0c040"/><rect x="63" y="35" width="7.5" height="7.5" fill="#f08030"/><rect x="70" y="35" width="7.5" height="7.5" fill="#f07020"/><rect x="77" y="35" width="7.5" height="7.5" fill="#f06020"/><rect x="0" y="42" width="7.5" height="7.5" fill="#f0a030"/><rect x="7" y="42" width="7.5" height="7.5" fill="#e0c040"/><rect x="14" y="42" width="7.5" height="7.5" fill="#f07030"/><rect x="21" y="42" width="7.5" height="7.5" fill="#c02080"/><rect x="28" y="42" width="7.5" height="7.5" fill="#f0c030"/><rect x="35" y="42" width="7.5" height="7.5" fill="#f09030"/><rect x="42" y="42" width="7.5" height="7.5" fill="#e04030"/><rect x="49" y="42" width="7.5" height="7.5" fill="#f0c040"/><rect x="56" y="42" width="7.5" height="7.5" fill="#f08030"/><rect x="63" y="42" width="7.5" height="7.5" fill="#b02080"/><rect x="70" y="42" width="7.5" height="7.5" fill="#f07020"/><rect x="77" y="42" width="7.5" height="7.5" fill="#e06020"/><rect x="0" y="49" width="7.5" height="7.5" fill="#a0c040"/><rect x="7" y="49" width="7.5" height="7.5" fill="#d0c040"/><rect x="14" y="49" width="7.5" height="7.5" fill="#3070c0"/><rect x="21" y="49" width="7.5" height="7.5" fill="#c02080"/><rect x="28" y="49" width="7.5" height="7.5" fill="#e0c040"/><rect x="35" y="49" width="7.5" height="7.5" fill="#e04030"/><rect x="42" y="49" width="7.5" height="7.5" fill="#f07030"/><rect x="49" y="49" width="7.5" height="7.5" fill="#f08030"/><rect x="56" y="49" width="7.5" height="7.5" fill="#3090e0"/><rect x="63" y="49" width="7.5" height="7.5" fill="#c02090"/><rect x="70" y="49" width="7.5" height="7.5" fill="#3080d0"/><rect x="77" y="49" width="7.5" height="7.5" fill="#f06020"/></g><circle cx="43" cy="41" r="1.8" fill="#e8f4ff" opacity=".8"/><circle cx="71" cy="24" r="1.4" fill="#e8f4ff" opacity=".7"/></svg></div>
<div class="th" style="left:870px;top:122px;width:84px;height:56px"><svg width="84" height="56" viewBox="0 0 84 56" style="display:block"><defs><linearGradient id="itg" x1="0" y1="0" x2="0" y2="1"><stop offset="0" stop-color="#12504e"/><stop offset=".5" stop-color="#1a4e68"/><stop offset="1" stop-color="#1e5080"/></linearGradient>
<radialGradient id="itr" cx=".85" cy=".7" r=".45"><stop offset="0" stop-color="#a0d0b8"/><stop offset=".55" stop-color="#5a9a98" stop-opacity=".7"/><stop offset="1" stop-color="#5a9a98" stop-opacity="0"/></radialGradient>
<radialGradient id="itr2" cx=".38" cy=".55" r=".18"><stop offset="0" stop-color="#0a2a40"/><stop offset="1" stop-color="#0a2a40" stop-opacity="0"/></radialGradient>
<radialGradient id="itr3" cx=".5" cy=".45" r=".3"><stop offset="0" stop-color="#3a7a88" stop-opacity=".6"/><stop offset="1" stop-color="#3a7a88" stop-opacity="0"/></radialGradient>
<filter id="blur6" x="-10%" y="-10%" width="120%" height="120%"><feGaussianBlur stdDeviation=".35"/></filter></defs><rect width="84" height="56" fill="url(#itg)"/><rect width="84" height="56" fill="url(#itr3)"/><rect width="84" height="56" fill="url(#itr2)"/><rect width="84" height="56" fill="url(#itr)"/><g filter="url(#blur6)"><circle cx="83.5" cy="25.1" r="0.6" fill="#d8f0e0" opacity=".75"/><circle cx="83.5" cy="54.8" r="0.6" fill="#b0d8c8" opacity=".75"/><circle cx="67.3" cy="42.3" r="0.8" fill="#d8f0e0" opacity=".75"/><circle cx="59.3" cy="21.8" r="0.8" fill="#80b8b0" opacity=".75"/><circle cx="65.4" cy="27.7" r="0.7" fill="#b0d8c8" opacity=".75"/><circle cx="67.3" cy="23.1" r="0.4" fill="#b0d8c8" opacity=".75"/><circle cx="80.2" cy="48.2" r="0.7" fill="#e8f8f0" opacity=".75"/><circle cx="70.6" cy="31.2" r="0.6" fill="#80b8b0" opacity=".75"/><circle cx="78.9" cy="31.4" r="0.7" fill="#80b8b0" opacity=".75"/><circle cx="59.1" cy="20.6" r="0.6" fill="#d8f0e0" opacity=".75"/><circle cx="78.8" cy="33.4" r="0.4" fill="#d8f0e0" opacity=".75"/><circle cx="72.4" cy="21.2" r="0.7" fill="#b0d8c8" opacity=".75"/><circle cx="75.4" cy="54.6" r="0.8" fill="#b0d8c8" opacity=".75"/><circle cx="70.3" cy="51.4" r="0.7" fill="#b0d8c8" opacity=".75"/><circle cx="77.1" cy="42.2" r="0.5" fill="#80b8b0" opacity=".75"/><circle cx="66.4" cy="37.1" r="0.7" fill="#80b8b0" opacity=".75"/><circle cx="56.2" cy="35.2" r="0.7" fill="#d8f0e0" opacity=".75"/><circle cx="74.3" cy="33.2" r="0.6" fill="#e8f8f0" opacity=".75"/><circle cx="68.9" cy="15.7" r="0.8" fill="#80b8b0" opacity=".75"/><circle cx="56.6" cy="53.9" r="0.9" fill="#d8f0e0" opacity=".75"/><circle cx="72.2" cy="48.2" r="0.5" fill="#e8f8f0" opacity=".75"/><circle cx="75.7" cy="47.4" r="0.4" fill="#b0d8c8" opacity=".75"/><circle cx="55.4" cy="45.8" r="0.9" fill="#80b8b0" opacity=".75"/><circle cx="61.1" cy="38.9" r="0.6" fill="#b0d8c8" opacity=".75"/><circle cx="69.9" cy="51.6" r="0.5" fill="#80b8b0" opacity=".75"/><circle cx="63.4" cy="40.7" r="0.7" fill="#e8f8f0" opacity=".75"/><circle cx="65.5" cy="51.1" r="0.8" fill="#e8f8f0" opacity=".75"/><circle cx="56.3" cy="29.8" r="0.6" fill="#b0d8c8" opacity=".75"/><circle cx="73.6" cy="32.6" r="0.5" fill="#d8f0e0" opacity=".75"/><circle cx="72.3" cy="45.4" r="0.7" fill="#80b8b0" opacity=".75"/><circle cx="68.7" cy="14.9" r="0.6" fill="#80b8b0" opacity=".75"/><circle cx="63.0" cy="36.4" r="0.7" fill="#80b8b0" opacity=".75"/><circle cx="78.3" cy="46.9" r="0.9" fill="#80b8b0" opacity=".75"/><circle cx="79.3" cy="39.0" r="0.5" fill="#e8f8f0" opacity=".75"/><circle cx="57.9" cy="24.0" r="0.4" fill="#d8f0e0" opacity=".75"/><circle cx="64.2" cy="53.5" r="0.7" fill="#b0d8c8" opacity=".75"/><circle cx="68.3" cy="41.2" r="0.7" fill="#b0d8c8" opacity=".75"/><circle cx="83.7" cy="44.4" r="0.6" fill="#d8f0e0" opacity=".75"/><circle cx="59.2" cy="52.3" r="0.5" fill="#e8f8f0" opacity=".75"/><circle cx="80.7" cy="53.6" r="0.5" fill="#d8f0e0" opacity=".75"/><circle cx="67.8" cy="43.1" r="0.6" fill="#e8f8f0" opacity=".75"/><circle cx="70.8" cy="15.3" r="0.7" fill="#d8f0e0" opacity=".75"/><circle cx="80.2" cy="53.7" r="0.5" fill="#b0d8c8" opacity=".75"/><circle cx="80.1" cy="45.7" r="0.6" fill="#80b8b0" opacity=".75"/><circle cx="68.4" cy="26.4" r="0.4" fill="#80b8b0" opacity=".75"/><circle cx="62.2" cy="49.8" r="0.8" fill="#d8f0e0" opacity=".75"/><circle cx="71.4" cy="48.8" r="0.5" fill="#80b8b0" opacity=".75"/><circle cx="73.5" cy="55.1" r="0.4" fill="#e8f8f0" opacity=".75"/><circle cx="66.1" cy="54.2" r="0.5" fill="#b0d8c8" opacity=".75"/><circle cx="70.7" cy="47.1" r="0.4" fill="#80b8b0" opacity=".75"/><circle cx="80.9" cy="51.5" r="0.8" fill="#e8f8f0" opacity=".75"/><circle cx="56.7" cy="51.1" r="0.5" fill="#e8f8f0" opacity=".75"/><circle cx="66.1" cy="42.9" r="0.6" fill="#d8f0e0" opacity=".75"/><circle cx="77.1" cy="41.8" r="0.6" fill="#b0d8c8" opacity=".75"/><circle cx="70.3" cy="24.8" r="0.6" fill="#80b8b0" opacity=".75"/><circle cx="78.9" cy="24.0" r="0.8" fill="#80b8b0" opacity=".75"/><circle cx="76.4" cy="39.9" r="0.8" fill="#b0d8c8" opacity=".75"/><circle cx="66.5" cy="28.6" r="0.5" fill="#b0d8c8" opacity=".75"/><circle cx="82.0" cy="55.8" r="0.5" fill="#d8f0e0" opacity=".75"/><circle cx="51.3" cy="45.0" r="0.9" fill="#b0d8c8" opacity=".75"/><circle cx="78.7" cy="46.5" r="0.7" fill="#b0d8c8" opacity=".75"/><circle cx="68.2" cy="33.1" r="0.8" fill="#d8f0e0" opacity=".75"/><circle cx="77.8" cy="35.8" r="0.8" fill="#b0d8c8" opacity=".75"/><circle cx="76.6" cy="52.1" r="0.7" fill="#80b8b0" opacity=".75"/><circle cx="63.8" cy="44.1" r="0.7" fill="#80b8b0" opacity=".75"/><circle cx="58.1" cy="53.8" r="0.6" fill="#b0d8c8" opacity=".75"/><circle cx="52.1" cy="30.8" r="0.9" fill="#e8f8f0" opacity=".75"/><circle cx="67.7" cy="42.3" r="0.5" fill="#d8f0e0" opacity=".75"/><circle cx="72.6" cy="53.5" r="0.9" fill="#b0d8c8" opacity=".75"/><circle cx="82.3" cy="33.4" r="0.8" fill="#d8f0e0" opacity=".75"/><circle cx="67.9" cy="33.7" r="0.8" fill="#b0d8c8" opacity=".75"/><circle cx="73.4" cy="41.3" r="0.6" fill="#e8f8f0" opacity=".75"/><circle cx="77.4" cy="25.2" r="0.9" fill="#80b8b0" opacity=".75"/><circle cx="69.9" cy="34.2" r="0.6" fill="#80b8b0" opacity=".75"/><circle cx="68.8" cy="27.5" r="0.7" fill="#d8f0e0" opacity=".75"/><circle cx="79.9" cy="46.9" r="0.7" fill="#80b8b0" opacity=".75"/><circle cx="81.9" cy="41.6" r="0.7" fill="#d8f0e0" opacity=".75"/><circle cx="77.6" cy="21.8" r="0.5" fill="#b0d8c8" opacity=".75"/><circle cx="70.3" cy="55.0" r="0.5" fill="#80b8b0" opacity=".75"/><circle cx="70.5" cy="36.3" r="0.7" fill="#e8f8f0" opacity=".75"/><circle cx="58.4" cy="48.7" r="0.6" fill="#d8f0e0" opacity=".75"/><circle cx="79.8" cy="43.4" r="0.7" fill="#b0d8c8" opacity=".75"/><circle cx="77.0" cy="29.7" r="0.5" fill="#d8f0e0" opacity=".75"/><circle cx="55.9" cy="41.2" r="0.7" fill="#d8f0e0" opacity=".75"/><circle cx="73.9" cy="22.9" r="0.5" fill="#e8f8f0" opacity=".75"/><circle cx="55.6" cy="34.7" r="0.8" fill="#80b8b0" opacity=".75"/><circle cx="57.6" cy="37.3" r="0.6" fill="#d8f0e0" opacity=".75"/><circle cx="76.2" cy="34.0" r="0.8" fill="#d8f0e0" opacity=".75"/><circle cx="80.0" cy="39.7" r="0.5" fill="#d8f0e0" opacity=".75"/><circle cx="69.3" cy="33.2" r="0.7" fill="#d8f0e0" opacity=".75"/><circle cx="78.2" cy="31.7" r="0.6" fill="#d8f0e0" opacity=".75"/><circle cx="76.2" cy="47.0" r="0.8" fill="#80b8b0" opacity=".75"/><circle cx="65.4" cy="52.4" r="0.8" fill="#d8f0e0" opacity=".75"/><circle cx="74.0" cy="31.7" r="0.6" fill="#e8f8f0" opacity=".75"/><circle cx="60.9" cy="31.3" r="0.5" fill="#e8f8f0" opacity=".75"/></g></svg></div>
<div class="th" style="left:295px;top:243px;width:84px;height:35px"><svg width="84" height="35" viewBox="0 0 84 35" style="display:block"><defs><linearGradient id="adg" x1="0" y1="0" x2="0" y2="1"><stop offset="0" stop-color="#1a58d8"/><stop offset=".7" stop-color="#2a78e8"/><stop offset="1" stop-color="#5aa0d8"/></linearGradient>
<linearGradient id="adg3" x1="0" y1="0" x2="1" y2="0"><stop offset="0" stop-color="#0a30c0" stop-opacity=".0"/><stop offset=".8" stop-color="#0a30c0" stop-opacity=".0"/><stop offset="1" stop-color="#1a40d0" stop-opacity=".35"/></linearGradient>
<filter id="blur7" x="-20%" y="-20%" width="140%" height="140%"><feGaussianBlur stdDeviation="1.5"/></filter></defs><rect width="84" height="35" fill="url(#adg)"/>
<g filter="url(#blur7)" fill="none">
<path d="M8 12 C20 2 36 4 50 20 C56 27 58 32 60 36" stroke="#38b0ff" stroke-width="4" opacity=".5"/>
<path d="M20 2 C34 2 48 8 62 26" stroke="#40b8ff" stroke-width="3" opacity=".45"/>
<path d="M0 10 L8 2" stroke="#0a28a0" stroke-width="4" opacity=".6"/>
</g>
<rect width="84" height="35" fill="url(#adg3)"/>
<rect y="29" width="84" height="6" fill="#80c8e0" opacity=".2"/></svg></div>
<div class="th" style="left:410px;top:238px;width:84px;height:56px"><svg width="84" height="56" viewBox="0 0 84 56" style="display:block"><defs><linearGradient id="ssg" x1="0" y1="0" x2="0" y2="1"><stop offset="0" stop-color="#e89060"/><stop offset=".3" stop-color="#f08040"/><stop offset=".42" stop-color="#d87840"/><stop offset=".5" stop-color="#8a6e5e"/><stop offset=".58" stop-color="#6a5e58"/><stop offset=".75" stop-color="#5a5250"/><stop offset="1" stop-color="#302c30"/></linearGradient>
<radialGradient id="ssr" cx=".62" cy=".28" r=".2"><stop offset="0" stop-color="#fff8d0"/><stop offset=".25" stop-color="#ffd080" stop-opacity=".9"/><stop offset="1" stop-color="#ff9040" stop-opacity="0"/></radialGradient>
<linearGradient id="ssl" x1="0" y1="0" x2="1" y2="0"><stop offset="0" stop-color="#000" stop-opacity=".35"/><stop offset=".4" stop-color="#000" stop-opacity="0"/></linearGradient>
<filter id="blur8" x="-20%" y="-20%" width="140%" height="140%"><feGaussianBlur stdDeviation=".7"/></filter></defs><rect width="84" height="56" fill="url(#ssg)"/><rect width="84" height="56" fill="url(#ssr)"/><g filter="url(#blur8)"><path d="M-4.2 28 C7.8 25 19.8 30 37.8 28 C53.8 25 65.8 30 85.8 27" stroke="#b0a49c" stroke-width="1.1" fill="none" opacity=".5"/><path d="M-5.8 31 C6.2 28 18.2 33 36.2 31 C52.2 28 64.2 33 84.2 30" stroke="#b0a49c" stroke-width="1.1" fill="none" opacity=".5"/><path d="M-5.9 34 C6.1 31 18.1 36 36.1 34 C52.1 31 64.1 36 84.1 33" stroke="#b0a49c" stroke-width="1.1" fill="none" opacity=".5"/><path d="M2.2 37 C14.2 34 26.2 39 44.2 37 C60.2 34 72.2 39 92.2 36" stroke="#b0a49c" stroke-width="1.1" fill="none" opacity=".5"/><path d="M-4.5 40 C7.5 37 19.5 42 37.5 40 C53.5 37 65.5 42 85.5 39" stroke="#b0a49c" stroke-width="1.1" fill="none" opacity=".5"/><path d="M5.6 43 C17.6 40 29.6 45 47.6 43 C63.6 40 75.6 45 95.6 42" stroke="#b0a49c" stroke-width="1.1" fill="none" opacity=".5"/><path d="M-4.9 46 C7.1 43 19.1 48 37.1 46 C53.1 43 65.1 48 85.1 45" stroke="#b0a49c" stroke-width="1.1" fill="none" opacity=".5"/><path d="M4.4 49 C16.4 46 28.4 51 46.4 49 C62.4 46 74.4 51 94.4 48" stroke="#b0a49c" stroke-width="1.1" fill="none" opacity=".5"/><path d="M-4.5 52 C7.5 49 19.5 54 37.5 52 C53.5 49 65.5 54 85.5 51" stroke="#b0a49c" stroke-width="1.1" fill="none" opacity=".5"/><path d="M-5.8 55 C6.2 52 18.2 57 36.2 55 C52.2 52 64.2 57 84.2 54" stroke="#b0a49c" stroke-width="1.1" fill="none" opacity=".5"/></g><rect y="26" width="84" height="30" fill="url(#ssl)"/></svg></div>
<div class="th" style="left:525px;top:237px;width:83px;height:62px"><svg width="83" height="62" viewBox="0 0 83 62" style="display:block"><defs><radialGradient id="rdr" cx=".6" cy=".45" r=".7"><stop offset="0" stop-color="#2a3a22"/><stop offset="1" stop-color="#142020"/></radialGradient>
<radialGradient id="rdr2" cx=".6" cy=".55" r=".25"><stop offset="0" stop-color="#6a7040"/><stop offset="1" stop-color="#6a7040" stop-opacity="0"/></radialGradient>
<filter id="blur9" x="-20%" y="-20%" width="140%" height="140%"><feGaussianBlur stdDeviation=".45"/></filter></defs><rect width="83" height="62" fill="url(#rdr)"/><rect width="83" height="62" fill="url(#rdr2)"/><g filter="url(#blur9)"><circle cx="59.7" cy="15.0" r="0.9" fill="#d0d8d0" opacity=".55"/><circle cx="76.6" cy="22.7" r="0.9" fill="#d0d8d0" opacity=".55"/><circle cx="71.0" cy="45.2" r="0.6" fill="#8a9a88" opacity=".55"/><circle cx="46.3" cy="30.9" r="1.1" fill="#d0d8d0" opacity=".55"/><circle cx="21.1" cy="59.8" r="0.4" fill="#d0d8d0" opacity=".55"/><circle cx="5.0" cy="54.8" r="1.0" fill="#d0d8d0" opacity=".55"/><circle cx="6.6" cy="19.3" r="0.8" fill="#d0d8d0" opacity=".55"/><circle cx="79.5" cy="51.8" r="0.4" fill="#a0b0a0" opacity=".55"/><circle cx="30.5" cy="35.6" r="0.7" fill="#3a5a48" opacity=".55"/><circle cx="13.8" cy="59.9" r="0.7" fill="#8a9a88" opacity=".55"/><circle cx="53.5" cy="39.0" r="0.7" fill="#3a5a48" opacity=".55"/><circle cx="64.6" cy="28.1" r="0.9" fill="#5a7050" opacity=".55"/><circle cx="47.0" cy="18.1" r="0.8" fill="#8a9a88" opacity=".55"/><circle cx="54.0" cy="49.7" r="0.6" fill="#a0b0a0" opacity=".55"/><circle cx="50.3" cy="60.6" r="0.8" fill="#b8c4b8" opacity=".55"/><circle cx="25.6" cy="26.6" r="0.7" fill="#b8c4b8" opacity=".55"/><circle cx="56.8" cy="37.3" r="1.0" fill="#b8c4b8" opacity=".55"/><circle cx="23.5" cy="0.1" r="0.6" fill="#5a7050" opacity=".55"/><circle cx="13.1" cy="57.1" r="0.6" fill="#8a9a88" opacity=".55"/><circle cx="11.7" cy="55.2" r="0.5" fill="#a0b0a0" opacity=".55"/><circle cx="81.0" cy="49.4" r="0.9" fill="#a0b0a0" opacity=".55"/><circle cx="75.8" cy="21.5" r="0.8" fill="#8a9a88" opacity=".55"/><circle cx="40.2" cy="23.7" r="1.1" fill="#d0d8d0" opacity=".55"/><circle cx="19.4" cy="37.6" r="0.7" fill="#d0d8d0" opacity=".55"/><circle cx="58.8" cy="57.4" r="0.9" fill="#a0b0a0" opacity=".55"/><circle cx="65.7" cy="28.5" r="0.8" fill="#8a9a88" opacity=".55"/><circle cx="29.5" cy="3.9" r="0.8" fill="#3a5a48" opacity=".55"/><circle cx="74.4" cy="54.9" r="0.6" fill="#a0b0a0" opacity=".55"/><circle cx="42.0" cy="12.5" r="0.5" fill="#b8c4b8" opacity=".55"/><circle cx="15.0" cy="43.5" r="0.8" fill="#5a7050" opacity=".55"/><circle cx="29.8" cy="48.3" r="0.6" fill="#b8c4b8" opacity=".55"/><circle cx="76.6" cy="30.6" r="0.7" fill="#8a9a88" opacity=".55"/><circle cx="38.5" cy="5.1" r="0.8" fill="#5a7050" opacity=".55"/><circle cx="28.6" cy="32.2" r="0.5" fill="#8a9a88" opacity=".55"/><circle cx="17.0" cy="54.0" r="0.7" fill="#a0b0a0" opacity=".55"/><circle cx="47.1" cy="16.2" r="0.7" fill="#5a7050" opacity=".55"/><circle cx="78.6" cy="47.6" r="1.1" fill="#a0b0a0" opacity=".55"/><circle cx="21.1" cy="2.3" r="1.1" fill="#b8c4b8" opacity=".55"/><circle cx="31.4" cy="1.7" r="0.8" fill="#8a9a88" opacity=".55"/><circle cx="72.3" cy="28.4" r="1.0" fill="#8a9a88" opacity=".55"/><circle cx="53.1" cy="57.2" r="1.1" fill="#d0d8d0" opacity=".55"/><circle cx="21.3" cy="35.0" r="0.5" fill="#d0d8d0" opacity=".55"/><circle cx="76.4" cy="31.4" r="0.7" fill="#b8c4b8" opacity=".55"/><circle cx="13.3" cy="59.9" r="0.6" fill="#d0d8d0" opacity=".55"/><circle cx="3.2" cy="15.9" r="0.4" fill="#5a7050" opacity=".55"/><circle cx="45.9" cy="1.7" r="0.6" fill="#8a9a88" opacity=".55"/><circle cx="42.6" cy="45.9" r="0.4" fill="#3a5a48" opacity=".55"/><circle cx="12.0" cy="46.8" r="0.9" fill="#b8c4b8" opacity=".55"/><circle cx="24.8" cy="36.7" r="0.5" fill="#d0d8d0" opacity=".55"/><circle cx="26.9" cy="15.9" r="0.7" fill="#8a9a88" opacity=".55"/><circle cx="31.5" cy="27.4" r="1.0" fill="#b8c4b8" opacity=".55"/><circle cx="74.1" cy="29.0" r="1.0" fill="#b8c4b8" opacity=".55"/><circle cx="13.0" cy="51.6" r="1.1" fill="#8a9a88" opacity=".55"/><circle cx="71.9" cy="55.1" r="0.9" fill="#b8c4b8" opacity=".55"/><circle cx="79.5" cy="57.4" r="1.0" fill="#3a5a48" opacity=".55"/><circle cx="52.2" cy="28.0" r="0.6" fill="#5a7050" opacity=".55"/><circle cx="19.4" cy="7.2" r="0.5" fill="#5a7050" opacity=".55"/><circle cx="18.4" cy="3.5" r="0.7" fill="#d0d8d0" opacity=".55"/><circle cx="73.8" cy="27.2" r="0.6" fill="#b8c4b8" opacity=".55"/><circle cx="34.2" cy="9.7" r="0.8" fill="#5a7050" opacity=".55"/><circle cx="24.6" cy="49.9" r="0.7" fill="#5a7050" opacity=".55"/><circle cx="26.4" cy="56.0" r="0.5" fill="#8a9a88" opacity=".55"/><circle cx="42.6" cy="39.1" r="1.0" fill="#d0d8d0" opacity=".55"/><circle cx="46.5" cy="51.8" r="0.6" fill="#8a9a88" opacity=".55"/><circle cx="16.7" cy="22.6" r="1.1" fill="#5a7050" opacity=".55"/><circle cx="76.8" cy="6.0" r="0.7" fill="#5a7050" opacity=".55"/><circle cx="13.5" cy="51.6" r="0.5" fill="#5a7050" opacity=".55"/><circle cx="53.1" cy="27.4" r="0.6" fill="#a0b0a0" opacity=".55"/><circle cx="11.6" cy="0.1" r="0.6" fill="#a0b0a0" opacity=".55"/><circle cx="29.9" cy="2.5" r="0.6" fill="#3a5a48" opacity=".55"/><circle cx="47.4" cy="8.6" r="0.8" fill="#b8c4b8" opacity=".55"/><circle cx="19.1" cy="10.9" r="0.5" fill="#a0b0a0" opacity=".55"/><circle cx="7.3" cy="37.7" r="0.9" fill="#3a5a48" opacity=".55"/><circle cx="14.6" cy="8.5" r="0.9" fill="#d0d8d0" opacity=".55"/><circle cx="67.4" cy="36.1" r="0.4" fill="#b8c4b8" opacity=".55"/><circle cx="57.5" cy="32.2" r="1.0" fill="#d0d8d0" opacity=".55"/><circle cx="43.0" cy="21.6" r="1.0" fill="#5a7050" opacity=".55"/><circle cx="71.8" cy="30.6" r="0.7" fill="#8a9a88" opacity=".55"/><circle cx="63.3" cy="8.3" r="0.6" fill="#d0d8d0" opacity=".55"/><circle cx="15.4" cy="51.6" r="0.4" fill="#5a7050" opacity=".55"/><circle cx="58.3" cy="35.6" r="0.6" fill="#8a9a88" opacity=".55"/><circle cx="77.4" cy="60.1" r="0.5" fill="#8a9a88" opacity=".55"/><circle cx="59.3" cy="50.6" r="0.9" fill="#5a7050" opacity=".55"/><circle cx="72.1" cy="35.7" r="0.6" fill="#8a9a88" opacity=".55"/><circle cx="8.9" cy="45.3" r="0.8" fill="#3a5a48" opacity=".55"/><circle cx="44.0" cy="33.3" r="0.6" fill="#8a9a88" opacity=".55"/><circle cx="7.4" cy="38.4" r="0.5" fill="#b8c4b8" opacity=".55"/><circle cx="20.8" cy="50.7" r="0.4" fill="#8a9a88" opacity=".55"/><circle cx="76.9" cy="45.8" r="0.4" fill="#5a7050" opacity=".55"/><circle cx="49.8" cy="35.7" r="0.6" fill="#a0b0a0" opacity=".55"/><circle cx="36.9" cy="21.7" r="0.9" fill="#8a9a88" opacity=".55"/><circle cx="3.7" cy="7.6" r="0.8" fill="#3a5a48" opacity=".55"/><circle cx="63.2" cy="6.8" r="0.7" fill="#8a9a88" opacity=".55"/><circle cx="11.4" cy="36.7" r="0.5" fill="#b8c4b8" opacity=".55"/><circle cx="47.5" cy="46.3" r="1.1" fill="#b8c4b8" opacity=".55"/><circle cx="1.5" cy="39.4" r="0.7" fill="#d0d8d0" opacity=".55"/><circle cx="69.7" cy="32.6" r="1.1" fill="#3a5a48" opacity=".55"/><circle cx="4.3" cy="22.5" r="0.6" fill="#3a5a48" opacity=".55"/><circle cx="27.8" cy="27.0" r="1.0" fill="#a0b0a0" opacity=".55"/><circle cx="75.8" cy="50.5" r="0.4" fill="#a0b0a0" opacity=".55"/><circle cx="42.9" cy="59.4" r="0.6" fill="#5a7050" opacity=".55"/><circle cx="35.0" cy="39.2" r="0.5" fill="#5a7050" opacity=".55"/><circle cx="15.6" cy="20.1" r="0.8" fill="#b8c4b8" opacity=".55"/><circle cx="1.7" cy="8.6" r="0.9" fill="#3a5a48" opacity=".55"/><circle cx="77.8" cy="39.3" r="0.4" fill="#8a9a88" opacity=".55"/><circle cx="53.3" cy="16.5" r="0.8" fill="#d0d8d0" opacity=".55"/><circle cx="52.1" cy="50.0" r="0.8" fill="#8a9a88" opacity=".55"/><circle cx="20.8" cy="32.3" r="0.6" fill="#3a5a48" opacity=".55"/><circle cx="3.3" cy="7.0" r="0.9" fill="#5a7050" opacity=".55"/><circle cx="10.0" cy="36.8" r="1.0" fill="#a0b0a0" opacity=".55"/><circle cx="7.0" cy="36.6" r="0.7" fill="#b8c4b8" opacity=".55"/><circle cx="42.5" cy="54.9" r="0.8" fill="#3a5a48" opacity=".55"/><circle cx="22.8" cy="45.6" r="0.8" fill="#d0d8d0" opacity=".55"/><circle cx="69.7" cy="37.8" r="0.6" fill="#a0b0a0" opacity=".55"/><circle cx="32.1" cy="34.0" r="0.7" fill="#5a7050" opacity=".55"/><circle cx="45.5" cy="38.0" r="1.0" fill="#3a5a48" opacity=".55"/><circle cx="2.6" cy="20.7" r="0.8" fill="#b8c4b8" opacity=".55"/><circle cx="31.8" cy="36.3" r="1.0" fill="#8a9a88" opacity=".55"/><circle cx="13.5" cy="59.0" r="0.8" fill="#5a7050" opacity=".55"/><circle cx="40.8" cy="17.7" r="0.6" fill="#b8c4b8" opacity=".55"/><circle cx="64.1" cy="9.8" r="0.8" fill="#8a9a88" opacity=".55"/><circle cx="28.9" cy="40.8" r="0.7" fill="#a0b0a0" opacity=".55"/><circle cx="36.5" cy="45.6" r="0.8" fill="#8a9a88" opacity=".55"/><circle cx="82.1" cy="42.0" r="0.7" fill="#b8c4b8" opacity=".55"/><circle cx="55.5" cy="8.7" r="0.8" fill="#b8c4b8" opacity=".55"/><circle cx="70.5" cy="50.9" r="0.5" fill="#a0b0a0" opacity=".55"/><circle cx="71.1" cy="57.2" r="0.6" fill="#3a5a48" opacity=".55"/><circle cx="52.3" cy="39.2" r="0.5" fill="#d0d8d0" opacity=".55"/><circle cx="72.3" cy="0.3" r="0.8" fill="#a0b0a0" opacity=".55"/><circle cx="41.3" cy="59.7" r="0.5" fill="#a0b0a0" opacity=".55"/><circle cx="70.5" cy="17.3" r="0.8" fill="#a0b0a0" opacity=".55"/><circle cx="31.5" cy="28.0" r="0.6" fill="#3a5a48" opacity=".55"/><circle cx="29.3" cy="21.9" r="0.8" fill="#a0b0a0" opacity=".55"/><circle cx="31.9" cy="20.0" r="1.0" fill="#d0d8d0" opacity=".55"/><circle cx="41.5" cy="27.5" r="0.8" fill="#b8c4b8" opacity=".55"/><circle cx="66.6" cy="27.0" r="0.8" fill="#3a5a48" opacity=".55"/><circle cx="7.3" cy="57.1" r="1.1" fill="#5a7050" opacity=".55"/><circle cx="50.5" cy="15.0" r="0.5" fill="#5a7050" opacity=".55"/><circle cx="35.4" cy="56.5" r="0.4" fill="#8a9a88" opacity=".55"/><circle cx="21.3" cy="55.5" r="1.0" fill="#5a7050" opacity=".55"/><circle cx="64.2" cy="33.4" r="0.8" fill="#3a5a48" opacity=".55"/><circle cx="42.9" cy="42.5" r="0.7" fill="#3a5a48" opacity=".55"/><circle cx="3.4" cy="41.9" r="1.1" fill="#3a5a48" opacity=".55"/><circle cx="56.1" cy="32.6" r="0.7" fill="#8a9a88" opacity=".55"/><circle cx="41.6" cy="40.2" r="0.5" fill="#a0b0a0" opacity=".55"/><circle cx="15.6" cy="26.1" r="0.7" fill="#3a5a48" opacity=".55"/><circle cx="51.8" cy="61.8" r="0.9" fill="#5a7050" opacity=".55"/><circle cx="62.0" cy="5.7" r="0.6" fill="#5a7050" opacity=".55"/><circle cx="81.2" cy="51.2" r="0.5" fill="#a0b0a0" opacity=".55"/><circle cx="54.4" cy="18.3" r="1.0" fill="#5a7050" opacity=".55"/><circle cx="82.2" cy="55.1" r="0.8" fill="#3a5a48" opacity=".55"/><circle cx="43.5" cy="50.6" r="0.8" fill="#b8c4b8" opacity=".55"/><circle cx="15.6" cy="11.3" r="0.8" fill="#d0d8d0" opacity=".55"/><circle cx="8.8" cy="35.3" r="0.8" fill="#d0d8d0" opacity=".55"/><circle cx="3.5" cy="25.5" r="0.6" fill="#8a9a88" opacity=".55"/><circle cx="57.3" cy="0.2" r="0.7" fill="#5a7050" opacity=".55"/><circle cx="8.2" cy="1.0" r="0.5" fill="#8a9a88" opacity=".55"/><circle cx="41.3" cy="34.3" r="1.0" fill="#5a7050" opacity=".55"/><circle cx="74.3" cy="31.9" r="0.8" fill="#b8c4b8" opacity=".55"/><circle cx="34.1" cy="7.5" r="0.8" fill="#b8c4b8" opacity=".55"/><circle cx="42.3" cy="1.8" r="0.5" fill="#8a9a88" opacity=".55"/><circle cx="43.4" cy="51.0" r="0.7" fill="#a0b0a0" opacity=".55"/><circle cx="66.4" cy="40.3" r="0.9" fill="#d0d8d0" opacity=".55"/><circle cx="26.8" cy="44.4" r="0.6" fill="#5a7050" opacity=".55"/><circle cx="2.7" cy="39.0" r="0.4" fill="#a0b0a0" opacity=".55"/><circle cx="15.9" cy="38.7" r="0.4" fill="#8a9a88" opacity=".55"/><circle cx="73.9" cy="36.1" r="0.7" fill="#8a9a88" opacity=".55"/><circle cx="51.5" cy="15.5" r="0.5" fill="#8a9a88" opacity=".55"/><circle cx="48.7" cy="10.8" r="1.0" fill="#8a9a88" opacity=".55"/><circle cx="67.7" cy="18.8" r="0.6" fill="#a0b0a0" opacity=".55"/><circle cx="73.6" cy="60.7" r="0.6" fill="#8a9a88" opacity=".55"/><circle cx="32.4" cy="44.5" r="0.7" fill="#b8c4b8" opacity=".55"/><circle cx="33.1" cy="44.1" r="1.0" fill="#8a9a88" opacity=".55"/><circle cx="20.2" cy="10.8" r="0.7" fill="#5a7050" opacity=".55"/><circle cx="0.6" cy="54.7" r="0.8" fill="#3a5a48" opacity=".55"/><circle cx="9.5" cy="33.1" r="0.6" fill="#3a5a48" opacity=".55"/><circle cx="54.1" cy="59.6" r="1.0" fill="#3a5a48" opacity=".55"/><circle cx="29.2" cy="15.2" r="0.7" fill="#b8c4b8" opacity=".55"/><circle cx="28.6" cy="27.0" r="0.9" fill="#5a7050" opacity=".55"/><circle cx="28.3" cy="9.7" r="0.5" fill="#d0d8d0" opacity=".55"/><circle cx="16.3" cy="33.8" r="0.8" fill="#b8c4b8" opacity=".55"/><circle cx="38.8" cy="49.3" r="0.5" fill="#b8c4b8" opacity=".55"/><circle cx="29.3" cy="44.8" r="0.8" fill="#3a5a48" opacity=".55"/><circle cx="48.2" cy="18.4" r="0.8" fill="#3a5a48" opacity=".55"/><circle cx="18.9" cy="28.1" r="1.1" fill="#b8c4b8" opacity=".55"/><circle cx="82.8" cy="36.9" r="0.8" fill="#3a5a48" opacity=".55"/><circle cx="30.5" cy="15.3" r="0.8" fill="#a0b0a0" opacity=".55"/><circle cx="10.4" cy="46.5" r="0.8" fill="#d0d8d0" opacity=".55"/><circle cx="45.0" cy="16.8" r="0.4" fill="#3a5a48" opacity=".55"/><circle cx="59.6" cy="9.0" r="0.7" fill="#8a9a88" opacity=".55"/><circle cx="7.1" cy="11.0" r="0.6" fill="#b8c4b8" opacity=".55"/><circle cx="55.0" cy="6.8" r="1.0" fill="#a0b0a0" opacity=".55"/><circle cx="66.8" cy="47.0" r="0.4" fill="#b8c4b8" opacity=".55"/><circle cx="25.8" cy="14.0" r="1.0" fill="#b8c4b8" opacity=".55"/><circle cx="33.1" cy="22.1" r="0.9" fill="#3a5a48" opacity=".55"/><circle cx="73.3" cy="53.4" r="1.1" fill="#b8c4b8" opacity=".55"/><circle cx="14.6" cy="22.7" r="0.9" fill="#d0d8d0" opacity=".55"/><circle cx="74.4" cy="1.6" r="0.9" fill="#d0d8d0" opacity=".55"/><circle cx="20.6" cy="52.5" r="1.0" fill="#5a7050" opacity=".55"/><circle cx="8.1" cy="18.1" r="1.0" fill="#5a7050" opacity=".55"/><circle cx="60.9" cy="44.2" r="0.7" fill="#8a9a88" opacity=".55"/><circle cx="50.5" cy="26.7" r="0.5" fill="#5a7050" opacity=".55"/><circle cx="61.3" cy="34.2" r="0.8" fill="#d0d8d0" opacity=".55"/><circle cx="14.9" cy="52.0" r="0.7" fill="#a0b0a0" opacity=".55"/><circle cx="43.2" cy="57.4" r="0.9" fill="#d0d8d0" opacity=".55"/><circle cx="29.0" cy="0.1" r="0.6" fill="#d0d8d0" opacity=".55"/><circle cx="3.6" cy="53.0" r="0.9" fill="#a0b0a0" opacity=".55"/><circle cx="80.9" cy="42.2" r="1.0" fill="#8a9a88" opacity=".55"/><circle cx="17.4" cy="56.7" r="1.0" fill="#d0d8d0" opacity=".55"/><circle cx="34.6" cy="46.1" r="0.8" fill="#d0d8d0" opacity=".55"/><circle cx="18.3" cy="32.7" r="1.1" fill="#5a7050" opacity=".55"/><circle cx="35.2" cy="57.7" r="0.8" fill="#d0d8d0" opacity=".55"/><circle cx="57.1" cy="52.0" r="0.7" fill="#d0d8d0" opacity=".55"/><circle cx="4.5" cy="43.3" r="0.9" fill="#3a5a48" opacity=".55"/><circle cx="70.3" cy="48.3" r="0.9" fill="#3a5a48" opacity=".55"/><circle cx="3.6" cy="43.6" r="0.6" fill="#a0b0a0" opacity=".55"/><circle cx="45.4" cy="60.1" r="0.6" fill="#d0d8d0" opacity=".55"/><circle cx="21.6" cy="59.7" r="0.7" fill="#b8c4b8" opacity=".55"/><circle cx="34.2" cy="12.5" r="0.5" fill="#5a7050" opacity=".55"/><circle cx="57.0" cy="30.2" r="0.6" fill="#3a5a48" opacity=".55"/><circle cx="20.1" cy="32.0" r="0.5" fill="#3a5a48" opacity=".55"/><circle cx="53.2" cy="43.3" r="1.0" fill="#b8c4b8" opacity=".55"/><circle cx="11.8" cy="34.9" r="0.8" fill="#5a7050" opacity=".55"/><circle cx="9.8" cy="26.3" r="0.9" fill="#b8c4b8" opacity=".55"/><circle cx="12.8" cy="60.7" r="1.0" fill="#3a5a48" opacity=".55"/><circle cx="9.5" cy="17.9" r="0.7" fill="#5a7050" opacity=".55"/><circle cx="3.6" cy="55.5" r="0.5" fill="#5a7050" opacity=".55"/><circle cx="58.2" cy="27.8" r="0.5" fill="#8a9a88" opacity=".55"/><circle cx="36.9" cy="35.3" r="0.5" fill="#5a7050" opacity=".55"/><circle cx="6.0" cy="0.7" r="0.5" fill="#3a5a48" opacity=".55"/><circle cx="59.5" cy="60.8" r="0.6" fill="#a0b0a0" opacity=".55"/><circle cx="53.5" cy="59.3" r="0.5" fill="#3a5a48" opacity=".55"/><circle cx="45.1" cy="0.5" r="0.9" fill="#8a9a88" opacity=".55"/><circle cx="52.1" cy="58.0" r="0.9" fill="#d0d8d0" opacity=".55"/><circle cx="54.2" cy="4.8" r="0.4" fill="#d0d8d0" opacity=".55"/><circle cx="64.3" cy="52.1" r="0.7" fill="#5a7050" opacity=".55"/><circle cx="79.8" cy="32.6" r="0.5" fill="#d0d8d0" opacity=".55"/><circle cx="65.1" cy="51.5" r="0.8" fill="#d0d8d0" opacity=".55"/><circle cx="31.5" cy="40.1" r="0.6" fill="#5a7050" opacity=".55"/><circle cx="30.6" cy="34.2" r="1.0" fill="#5a7050" opacity=".55"/><circle cx="21.0" cy="3.6" r="0.8" fill="#8a9a88" opacity=".55"/><circle cx="52.1" cy="50.8" r="0.7" fill="#d0d8d0" opacity=".55"/><circle cx="4.2" cy="13.4" r="0.7" fill="#3a5a48" opacity=".55"/><circle cx="13.1" cy="18.6" r="0.8" fill="#a0b0a0" opacity=".55"/><circle cx="11.8" cy="14.1" r="0.7" fill="#b8c4b8" opacity=".55"/><circle cx="80.5" cy="5.6" r="1.0" fill="#8a9a88" opacity=".55"/><circle cx="39.8" cy="13.5" r="0.4" fill="#5a7050" opacity=".55"/><circle cx="69.8" cy="53.0" r="0.7" fill="#a0b0a0" opacity=".55"/><circle cx="23.5" cy="41.0" r="0.9" fill="#a0b0a0" opacity=".55"/><circle cx="73.9" cy="3.9" r="0.9" fill="#8a9a88" opacity=".55"/><circle cx="68.6" cy="56.0" r="0.7" fill="#b8c4b8" opacity=".55"/><circle cx="0.3" cy="49.9" r="0.6" fill="#d0d8d0" opacity=".55"/><circle cx="16.2" cy="5.3" r="0.8" fill="#5a7050" opacity=".55"/><circle cx="35.6" cy="33.2" r="1.0" fill="#d0d8d0" opacity=".55"/><circle cx="80.9" cy="59.6" r="0.5" fill="#a0b0a0" opacity=".55"/><circle cx="67.2" cy="44.8" r="0.8" fill="#5a7050" opacity=".55"/><circle cx="24.7" cy="35.4" r="0.7" fill="#5a7050" opacity=".55"/><circle cx="53.7" cy="18.6" r="0.8" fill="#5a7050" opacity=".55"/><circle cx="52.6" cy="52.6" r="0.9" fill="#b8c4b8" opacity=".55"/><circle cx="37.1" cy="5.3" r="0.8" fill="#d0d8d0" opacity=".55"/>
<path d="M42 0 C42 10 40 20 44 28 C48 32 50 36 46 39 C42 42 36 40 37 35 C38 31 34 34 33 40 C32 46 30 54 30 62" stroke="#d8e0d8" stroke-width="1.1" fill="none"/>
<path d="M24 14 C26 24 22 36 20 48" stroke="#c0d0c8" stroke-width="2" fill="none" opacity=".5"/></g></svg></div>
<div class="th" style="left:640px;top:241px;width:84px;height:46px"><svg width="84" height="46" viewBox="0 0 84 46" style="display:block"><defs><linearGradient id="csg" x1="0" y1="0" x2="0" y2="1"><stop offset="0" stop-color="#1a6ad0"/><stop offset=".5" stop-color="#1052b4"/><stop offset="1" stop-color="#0a2a70"/></linearGradient>
<radialGradient id="csr" cx="1" cy="1" r=".6"><stop offset="0" stop-color="#061850" stop-opacity=".6"/><stop offset="1" stop-color="#061850" stop-opacity="0"/></radialGradient></defs><rect width="84" height="46" fill="url(#csg)"/><rect width="84" height="46" fill="url(#csr)"/><rect x="3" y="0" width="1" height="46" fill="#000" opacity=".06"/><rect x="8" y="0" width="1" height="46" fill="#000" opacity=".06"/><rect x="13" y="0" width="1" height="46" fill="#000" opacity=".06"/><rect x="18" y="0" width="1" height="46" fill="#000" opacity=".06"/><rect x="23" y="0" width="1" height="46" fill="#000" opacity=".06"/><rect x="28" y="0" width="1" height="46" fill="#000" opacity=".06"/><rect x="33" y="0" width="1" height="46" fill="#000" opacity=".06"/><rect x="38" y="0" width="1" height="46" fill="#000" opacity=".06"/><rect x="43" y="0" width="1" height="46" fill="#000" opacity=".06"/><rect x="48" y="0" width="1" height="46" fill="#000" opacity=".06"/><rect x="53" y="0" width="1" height="46" fill="#000" opacity=".06"/><rect x="58" y="0" width="1" height="46" fill="#000" opacity=".06"/><rect x="63" y="0" width="1" height="46" fill="#000" opacity=".06"/><rect x="68" y="0" width="1" height="46" fill="#000" opacity=".06"/><rect x="73" y="0" width="1" height="46" fill="#000" opacity=".06"/><rect x="78" y="0" width="1" height="46" fill="#000" opacity=".06"/><rect x="83" y="0" width="1" height="46" fill="#000" opacity=".06"/></svg></div>
<div class="th" style="left:755px;top:239px;width:84px;height:52px"><div style="width:100%;height:100%;background:#4881cb"></div></div>
<div class="th" style="left:870px;top:239px;width:84px;height:52px"><svg width="84" height="52" viewBox="0 0 84 52" style="display:block"><defs></defs><rect width="84" height="52" fill="#58585a"/><circle cx="57.1" cy="41.6" r="0.5" fill="#b0b0b0" opacity=".55"/><circle cx="34.0" cy="2.5" r="0.6" fill="#b0b0b0" opacity=".55"/><circle cx="61.2" cy="18.4" r="0.6" fill="#b0b0b0" opacity=".55"/><circle cx="67.5" cy="38.3" r="0.4" fill="#b0b0b0" opacity=".55"/><circle cx="66.5" cy="25.4" r="0.4" fill="#b0b0b0" opacity=".55"/><circle cx="22.6" cy="23.1" r="0.7" fill="#b0b0b0" opacity=".55"/><circle cx="40.9" cy="25.2" r="0.6" fill="#b0b0b0" opacity=".55"/><circle cx="58.2" cy="23.3" r="0.7" fill="#b0b0b0" opacity=".55"/><circle cx="43.4" cy="18.8" r="0.4" fill="#b0b0b0" opacity=".55"/><circle cx="68.8" cy="37.8" r="0.5" fill="#b0b0b0" opacity=".55"/><circle cx="40.6" cy="11.8" r="0.7" fill="#b0b0b0" opacity=".55"/><circle cx="12.1" cy="20.0" r="0.7" fill="#b0b0b0" opacity=".55"/><circle cx="66.5" cy="41.2" r="0.6" fill="#b0b0b0" opacity=".55"/><circle cx="56.4" cy="21.1" r="0.6" fill="#b0b0b0" opacity=".55"/><circle cx="55.3" cy="50.2" r="0.4" fill="#b0b0b0" opacity=".55"/><circle cx="52.6" cy="12.3" r="0.3" fill="#b0b0b0" opacity=".55"/><circle cx="42.2" cy="5.2" r="0.3" fill="#b0b0b0" opacity=".55"/><circle cx="10.8" cy="2.5" r="0.6" fill="#b0b0b0" opacity=".55"/><circle cx="48.3" cy="37.4" r="0.4" fill="#b0b0b0" opacity=".55"/><circle cx="13.2" cy="1.0" r="0.5" fill="#b0b0b0" opacity=".55"/><circle cx="40.1" cy="1.6" r="0.6" fill="#b0b0b0" opacity=".55"/><circle cx="68.0" cy="50.8" r="0.6" fill="#b0b0b0" opacity=".55"/><circle cx="44.4" cy="18.2" r="0.5" fill="#b0b0b0" opacity=".55"/><circle cx="56.6" cy="18.2" r="0.5" fill="#b0b0b0" opacity=".55"/><circle cx="64.6" cy="49.6" r="0.4" fill="#b0b0b0" opacity=".55"/><circle cx="36.5" cy="7.3" r="0.6" fill="#b0b0b0" opacity=".55"/><circle cx="55.9" cy="20.6" r="0.7" fill="#b0b0b0" opacity=".55"/><circle cx="49.2" cy="10.5" r="0.3" fill="#b0b0b0" opacity=".55"/><circle cx="58.7" cy="37.9" r="0.7" fill="#b0b0b0" opacity=".55"/><circle cx="45.4" cy="19.9" r="0.6" fill="#b0b0b0" opacity=".55"/><circle cx="53.3" cy="12.4" r="0.7" fill="#b0b0b0" opacity=".55"/><circle cx="69.3" cy="34.5" r="0.5" fill="#b0b0b0" opacity=".55"/><circle cx="56.1" cy="23.7" r="0.5" fill="#b0b0b0" opacity=".55"/><circle cx="54.4" cy="24.5" r="0.5" fill="#b0b0b0" opacity=".55"/><circle cx="30.6" cy="10.7" r="0.4" fill="#b0b0b0" opacity=".55"/><circle cx="53.3" cy="38.0" r="0.5" fill="#b0b0b0" opacity=".55"/></svg></div>
<div class="th" style="left:295px;top:358px;width:84px;height:83px"><div style="width:100%;height:100%;background:#737277"></div></div>
<div class="th" style="left:410px;top:367px;width:84px;height:47px"><div style="width:100%;height:100%;background:radial-gradient(ellipse at 50% 40%,#cfc49a 0%,#b8ad80 55%,#8e8458 100%)"></div></div>
<div class="tt" style="left:280.5px;top:190px;letter-spacing:0.49px;text-indent:0.49px">Light Waves</div>
<div class="td" style="left:280.5px;top:202px">6016x4016</div>
<div class="tt" style="left:395.5px;top:188px;letter-spacing:0.49px;text-indent:0.49px">Light Waves</div>
<div class="td" style="left:395.5px;top:200px">6016x4016</div>
<div class="tt" style="left:510.5px;top:190px;letter-spacing:0.3px;text-indent:0.3px">Dark Ivy</div>
<div class="td" style="left:510.5px;top:201px">2560x1600</div>
<div class="tt" style="left:625.5px;top:190px;letter-spacing:0.26px;text-indent:0.26px">Endless Shapes</div>
<div class="td" style="left:625.5px;top:201px">3840x2400</div>
<div class="tt" style="left:740.5px;top:191px;letter-spacing:0.02px;text-indent:0.02px">Acrylic</div>
<div class="td" style="left:740.5px;top:202px">5403x3602</div>
<div class="tt" style="left:855.5px;top:191px;letter-spacing:0.28px;text-indent:0.28px">Ice Twigs</div>
<div class="td" style="left:855.5px;top:202px">3986x2657</div>
<div class="tt" style="left:280.5px;top:305px;letter-spacing:0.31px;text-indent:0.31px">Adwaita</div>
<div class="td" style="left:280.5px;top:316px">10240x4320</div>
<div class="tt" style="left:395.5px;top:309px;letter-spacing:0.41px;text-indent:0.41px">Sea Sunset</div>
<div class="td" style="left:395.5px;top:321px">5760x3840</div>
<div class="tt" style="left:510.5px;top:311px;letter-spacing:0.07px;text-indent:0.07px">Road</div>
<div class="td" style="left:510.5px;top:323px">3310x2481</div>
<div class="tt" style="left:625.5px;top:308px;letter-spacing:0.34px;text-indent:0.34px">Color Stripes</div>
<div class="td" style="left:625.5px;top:320px">7680x4320</div>
<div class="tt" style="left:740.5px;top:309px;letter-spacing:0.23px;text-indent:0.23px">Symbolics 1</div>
<div class="td" style="left:740.5px;top:321px">3840x2400</div>
<div class="tt" style="left:855.5px;top:309px;letter-spacing:0.28px;text-indent:0.28px">Symbolics 2</div>
<div class="td" style="left:855.5px;top:321px">3840x2400</div>
<div class="tt" style="left:280.5px;top:453px;letter-spacing:-0.19px;text-indent:-0.19px">VNC</div>
<div class="td" style="left:280.5px;top:465px">256x256</div>
<div class="tt" style="left:395.5px;top:444px;letter-spacing:0.39px;text-indent:0.39px">Wood</div>
<div class="td" style="left:395.5px;top:455px">7680x4320</div>

<!-- taskbar -->
<div class="abs" style="left:0;top:716px;width:1200px;height:34px;background:#545454"></div>
<div class="abs" style="left:146px;top:716px;width:33px;height:34px;background:#6a6a6a;border:1px solid #7a7a7a"></div>
<!-- start -->
<svg class="abs" style="left:0;top:718px" width="30" height="30" viewBox="0 0 30 30">
<defs><clipPath id="stc"><circle cx="14" cy="15.2" r="9.6"/></clipPath></defs>
<circle cx="14" cy="15.2" r="10.5" fill="none" stroke="#d6d6d6" stroke-width="2.2"/>
<path d="M3 23 L14.4 11.2 L16 13.6 L14.6 17 L19.2 13.2 L27 21 V30 H0 V26 Z" fill="#d6d6d6" clip-path="url(#stc)"/>
</svg>
<!-- folder -->
<svg class="abs" style="left:35px;top:722px" width="26" height="23" viewBox="0 0 26 23">
<path d="M1 2.5 H9 L11 4 H24 V21.5 H1 Z" fill="#8d7d58"/>
<path d="M1 6 H9 L11 4.5 H24.5 V21.5 H1 Z" fill="#d7c7a0"/>
<rect x="1" y="20" width="23.5" height="1.5" fill="#9a8a62"/>
<circle cx="8" cy="11.5" r=".9" fill="#5a5040"/><circle cx="17" cy="11.5" r=".9" fill="#5a5040"/>
<text x="12.5" y="17.5" font-size="8" text-anchor="middle" fill="#6a604a" font-family="Liberation Sans">D</text>
</svg>
<!-- terminal -->
<svg class="abs" style="left:74px;top:721px" width="24" height="24" viewBox="0 0 24 24">
<rect x="1" y="1" width="22" height="22" rx="1.5" fill="#cfcfcf"/>
<rect x="2.2" y="2.2" width="19.6" height="19" fill="#1e1c2e"/>
<path d="M5 5 L8 7 L5 9" stroke="#e8e8e8" stroke-width="1.2" fill="none"/>
<line x1="8.5" y1="10.5" x2="12" y2="10.5" stroke="#e8e8e8" stroke-width="1.2"/>
</svg>
<!-- cabinet -->
<svg class="abs" style="left:113px;top:719px" width="22" height="27" viewBox="0 0 22 27">
<path d="M3 1.5 H18 L20.5 4 V25.5 H2 V4 Z" fill="#ececec" stroke="#bdbdbd" stroke-width=".8"/>
<rect x="3.8" y="5" width="14.5" height="8" fill="#dcdcdc" stroke="#a8a8a8" stroke-width=".6"/>
<rect x="3.8" y="15" width="14.5" height="8.5" fill="#dcdcdc" stroke="#a8a8a8" stroke-width=".6"/>
<rect x="8" y="8" width="6" height="2" fill="#f8f8f8" stroke="#888" stroke-width=".5"/>
<rect x="8" y="18" width="6" height="2" fill="#f8f8f8" stroke="#888" stroke-width=".5"/>
</svg>
<!-- image viewer -->
<svg class="abs" style="left:150px;top:721px" width="26" height="25" viewBox="0 0 26 25">
<rect x="1" y="1.5" width="23.5" height="22" fill="#f0ede8"/>
<rect x="2.5" y="3" width="20.5" height="19" fill="#6a7a2a"/>
<rect x="2.5" y="3" width="4" height="19" fill="#2b6fae"/>
<rect x="6.5" y="3" width="4" height="19" fill="#d42a2a"/>
<path d="M10.5 3 H14 L18 22 H10.5 Z" fill="#f0a020"/>
<path d="M14 3 H17 L20 22 H18 Z" fill="#c8c020"/>
</svg>
<!-- tray -->
<div class="abs" style="left:1085px;top:727px;width:15px;height:11px;border-radius:5px;background:#3a4778;opacity:.8;filter:blur(1.5px)"></div>
<svg class="abs" style="left:1107px;top:726px" width="16" height="14" viewBox="0 0 16 14">
<rect x="4" y="1" width="8" height="3" fill="#e0e0e0"/>
<rect x="1.5" y="4" width="13" height="6" rx="1" fill="#e0e0e0"/>
<rect x="4" y="8" width="8" height="4.5" fill="#e0e0e0" stroke="#4e4e4e" stroke-width=".8"/>
</svg>
<svg class="abs" style="left:1129px;top:727px" width="15" height="14" viewBox="0 0 15 14">
<rect x="5.5" y="0.5" width="4" height="4" fill="#e0e0e0"/>
<path d="M7.5 4.5 V7 M2.5 9.5 V7 H12.5 V9.5" stroke="#e0e0e0" stroke-width="1" fill="none"/>
<rect x="0.5" y="9" width="4.5" height="4.5" fill="#e0e0e0"/>
<rect x="10" y="9" width="4.5" height="4.5" fill="#e0e0e0"/>
</svg>
<svg class="abs" style="left:1147px;top:727px" width="15" height="13" viewBox="0 0 15 13">
<path d="M1 4 H4 L8 1 V12 L4 9 H1 Z" fill="#e0e0e0"/>
<path d="M9.5 4 Q11 6.5 9.5 9" stroke="#d8d8d8" stroke-width="1.1" fill="none"/>
<path d="M11.5 2.5 Q14 6.5 11.5 10.5" stroke="#bcbcbc" stroke-width="1" fill="none"/>
</svg>
<div class="abs" style="left:1167px;top:726px;font-size:11px;font-weight:bold;color:#e0e0e0;letter-spacing:.1px;line-height:13px">10:44</div>
<!-- watermark -->
<svg class="abs" style="left:970px;top:640px" width="230" height="76" viewBox="970 640 230 76">
<defs><linearGradient id="wmg" x1="0" y1="0" x2="0" y2="1"><stop offset="0" stop-color="#ffffff"/><stop offset=".5" stop-color="#fbfbfb"/><stop offset=".8" stop-color="#f0f0f0"/><stop offset="1" stop-color="#dedede"/></linearGradient></defs>
<circle cx="1010" cy="676" r="32" fill="url(#wmg)"/>
<path d="M1004.9 657 L1015 650.6 L1025.4 654.3 L1019 658.5 L1012 659 L1006 668 L1005 686 L1009.5 694 L1004 695 L987 697 L996 690 L999 673 L1003 664 Z" fill="#4b4382"/>
<path d="M1012.3 659 L1019 658.5 L1019.5 664 L1017.5 680 L1013.5 690 L1009.5 693.6 L1005 686 L1005.5 669 Z" fill="#f2f2ea"/>
<path d="M987 668.5 L1003 663.5 L1004 667 L992 669.5 Z" fill="#c4c8b0"/>
<path d="M1016.3 680 L1012.5 690 L1013.2 684 Z" fill="#4b4382"/>
<path d="M1007 693.5 L1019 697.5 L1018.5 699.5 L1005 696 Z" fill="#6e6e7e"/>
<g font-family="Liberation Sans" font-weight="bold" fill="#fafafa" stroke="#1a1a1a" stroke-width="6.5" stroke-linejoin="round" paint-order="stroke fill">
<text x="1047.5" y="668.5" font-size="20" letter-spacing="1.2" textLength="65" lengthAdjust="spacingAndGlyphs">Linux</text>
<text x="1048" y="696" font-size="21" letter-spacing="1" textLength="138" lengthAdjust="spacingAndGlyphs">Compatible</text>
</g>
<g font-family="Liberation Sans" font-weight="bold" fill="#fafafa" stroke="#fafafa" stroke-width="1.4" stroke-linejoin="round">
<text x="1047.5" y="668.5" font-size="20" textLength="65" lengthAdjust="spacingAndGlyphs">Linux</text>
<text x="1048" y="696" font-size="21" textLength="138" lengthAdjust="spacingAndGlyphs">Compatible</text>
</g>
</svg>
